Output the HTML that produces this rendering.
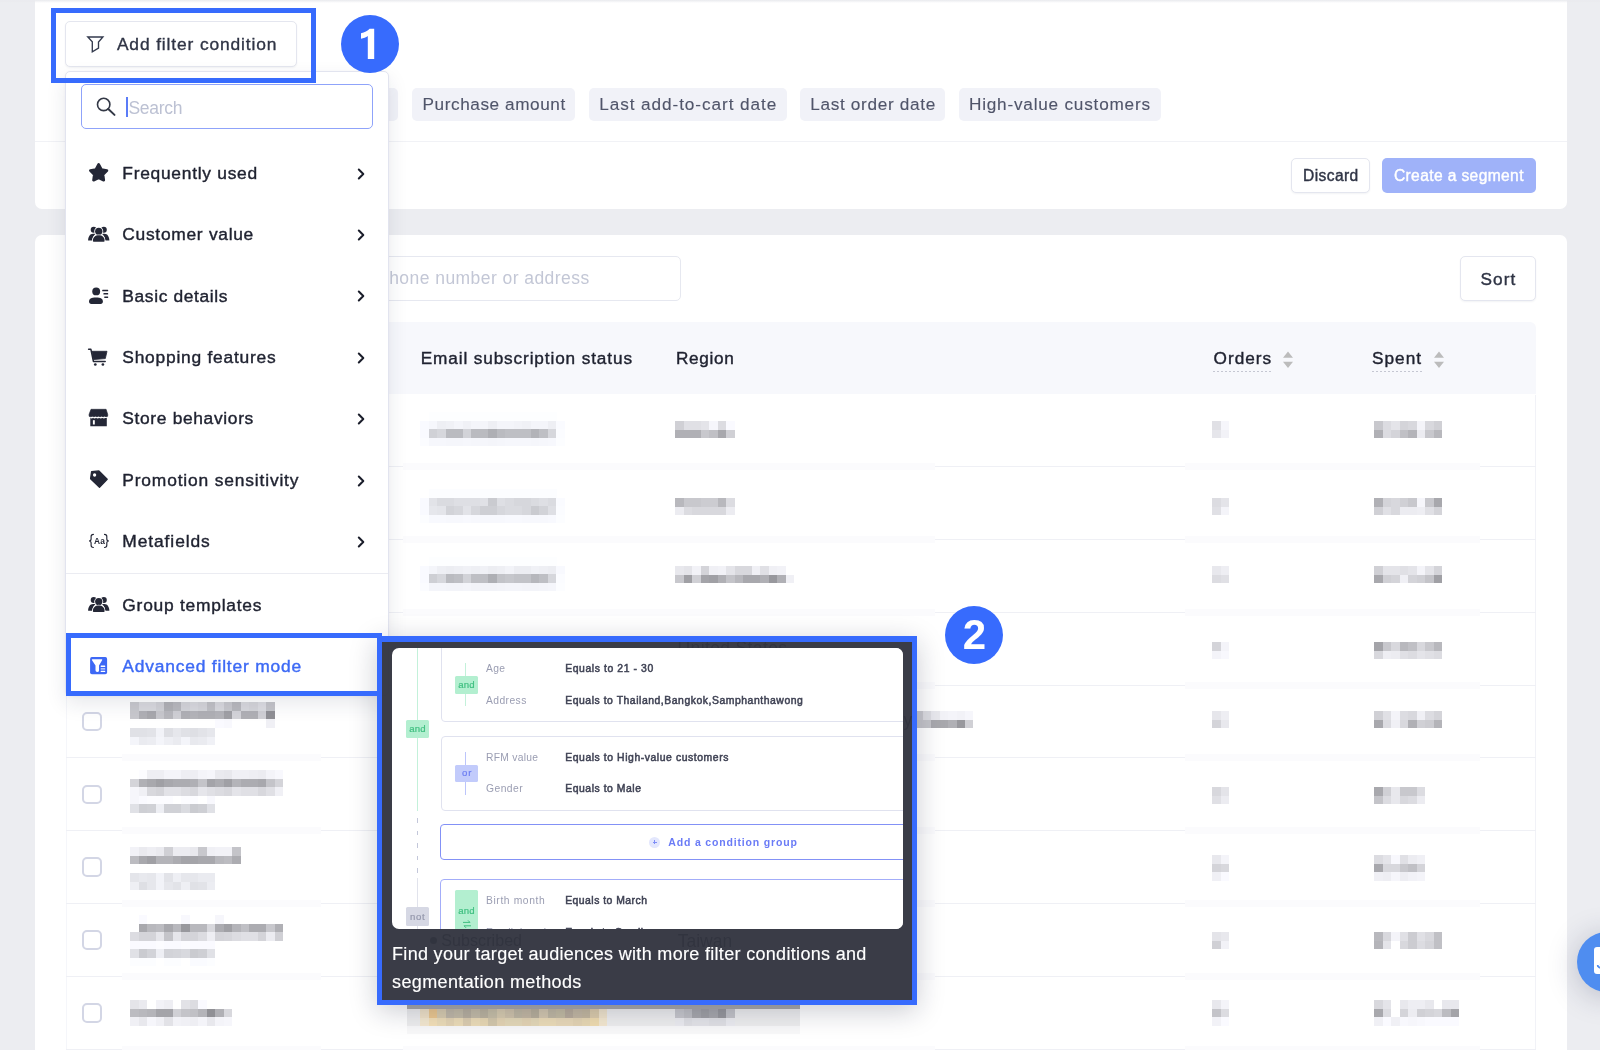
<!DOCTYPE html>
<html><head><meta charset="utf-8"><title>Customers</title><style>
html,body{margin:0;padding:0}
html{width:1600px;height:1050px;overflow:hidden}
body{width:1600px;height:1050px;overflow:hidden;background:#ecedf1;font-family:"Liberation Sans", sans-serif;position:relative}
div,span.t,svg{position:absolute;box-sizing:border-box}
span.t{white-space:pre;display:block}
</style></head>
<body>
<div id="root" style="left:0;top:0;width:1600px;height:1050px;overflow:hidden;will-change:transform">
<div style="left:34.50px;top:-10.00px;width:1532.10px;height:218.50px;background:#fff;border-radius:7px"></div>
<div style="left:0.00px;top:0.00px;width:1600.00px;height:2.50px;background:linear-gradient(#e9eaee,rgba(240,240,243,0))"></div>
<div style="left:34.50px;top:140.50px;width:1532.10px;height:1.00px;background:#f1f2f6"></div>
<div style="left:34.50px;top:235.40px;width:1532.10px;height:834.60px;background:#fff;border-radius:7px"></div>
<div style="left:65.40px;top:21.25px;width:231.30px;height:45.75px;background:#fff;border:1px solid #e4e6ef;border-radius:5px;box-shadow:0 1px 2px rgba(40,50,90,.06)"></div>
<svg style="left:84px;top:33px" width="24" height="24" viewBox="84 33 24 24"><path d="M87.8 37 L102.9 37 L98.5 42 L98.5 48.1 L92.3 51.9 L92.3 41.8 Z" fill="none" stroke="#333a4d" stroke-width="1.35" stroke-linejoin="miter"/></svg>
<span class="t" style="left:116.90px;top:36.00px;font-size:17.4px;line-height:17.4px;color:#2f3445;letter-spacing:0.870px;-webkit-text-stroke:0.34px #2f3445;">Add filter condition</span>
<div style="left:330.00px;top:88.20px;width:68.40px;height:32.40px;background:#f1f2f8;border-radius:5px"></div>
<div style="left:412.00px;top:88.20px;width:163.20px;height:32.40px;background:#f1f2f8;border-radius:5px"></div>
<span class="t" style="left:422.60px;top:96.00px;font-size:17.2px;line-height:17.2px;color:#50556a;letter-spacing:0.563px;-webkit-text-stroke:0.12px #50556a;">Purchase amount</span>
<div style="left:588.70px;top:88.20px;width:198.00px;height:32.40px;background:#f1f2f8;border-radius:5px"></div>
<span class="t" style="left:599.20px;top:96.00px;font-size:17.2px;line-height:17.2px;color:#50556a;letter-spacing:0.925px;-webkit-text-stroke:0.12px #50556a;">Last add-to-cart date</span>
<div style="left:800.20px;top:88.20px;width:145.20px;height:32.40px;background:#f1f2f8;border-radius:5px"></div>
<span class="t" style="left:810.20px;top:96.00px;font-size:17.2px;line-height:17.2px;color:#50556a;letter-spacing:0.684px;-webkit-text-stroke:0.12px #50556a;">Last order date</span>
<div style="left:958.50px;top:88.20px;width:202.10px;height:32.40px;background:#f1f2f8;border-radius:5px"></div>
<span class="t" style="left:969.00px;top:96.00px;font-size:17.2px;line-height:17.2px;color:#50556a;letter-spacing:0.778px;-webkit-text-stroke:0.12px #50556a;">High-value customers</span>
<div style="left:1290.80px;top:157.60px;width:79.70px;height:35.20px;background:#fff;border:1px solid #e4e6ef;border-radius:5px;box-shadow:0 1px 2px rgba(40,50,90,.06)"></div>
<span class="t" style="left:1303.10px;top:168.00px;font-size:15.6px;line-height:15.6px;color:#2f3445;letter-spacing:0.373px;-webkit-text-stroke:0.4px #2f3445;">Discard</span>
<div style="left:1381.50px;top:157.60px;width:154.30px;height:35.30px;background:#9fb2f9;border-radius:5px"></div>
<span class="t" style="left:1393.90px;top:168.00px;font-size:15.6px;line-height:15.6px;color:#ffffff;letter-spacing:0.376px;-webkit-text-stroke:0.4px #ffffff;">Create a segment</span>
<div style="left:65.40px;top:256.20px;width:615.60px;height:44.50px;background:#fff;border:1px solid #e6e8f0;border-radius:5px"></div>
<span class="t" style="left:389.20px;top:270.00px;font-size:17.5px;line-height:17.5px;color:#c3c7d6;letter-spacing:0.444px;">hone number or address</span>
<div style="left:1460.30px;top:256.20px;width:75.30px;height:45.20px;background:#fff;border:1px solid #e4e6ef;border-radius:5px;box-shadow:0 1px 2px rgba(40,50,90,.06)"></div>
<span class="t" style="left:1480.50px;top:271.00px;font-size:17.2px;line-height:17.2px;color:#2f3445;letter-spacing:1.123px;-webkit-text-stroke:0.4px #2f3445;">Sort</span>
<div style="left:66.00px;top:321.80px;width:1469.60px;height:72.70px;background:#f7f8fc;border-radius:6px 6px 0 0"></div>
<span class="t" style="left:420.70px;top:350.00px;font-size:17.2px;line-height:17.2px;color:#1f2230;letter-spacing:0.883px;-webkit-text-stroke:0.42px #1f2230;">Email subscription status</span>
<span class="t" style="left:676.00px;top:350.00px;font-size:17.2px;line-height:17.2px;color:#1f2230;letter-spacing:0.666px;-webkit-text-stroke:0.42px #1f2230;">Region</span>
<span class="t" style="left:1213.60px;top:350.00px;font-size:17.2px;line-height:17.2px;color:#1f2230;letter-spacing:0.974px;-webkit-text-stroke:0.42px #1f2230;">Orders</span>
<span class="t" style="left:1372.10px;top:350.00px;font-size:17.2px;line-height:17.2px;color:#1f2230;letter-spacing:0.995px;-webkit-text-stroke:0.42px #1f2230;">Spent</span>
<div style="left:1213.00px;top:371.00px;width:58.50px;height:1.00px;background:repeating-linear-gradient(90deg,#c5c7d2 0 2px,transparent 2px 4px)"></div>
<div style="left:1371.50px;top:371.00px;width:50.00px;height:1.00px;background:repeating-linear-gradient(90deg,#c5c7d2 0 2px,transparent 2px 4px)"></div>
<svg style="left:1282.1px;top:350px" width="12" height="20" viewBox="0 0 12 20"><path d="M6 1.6 L11 7.8 L1 7.8 Z M6 18 L11 11.8 L1 11.8 Z" fill="#bcbcbc"/></svg>
<svg style="left:1432.8px;top:350px" width="12" height="20" viewBox="0 0 12 20"><path d="M6 1.6 L11 7.8 L1 7.8 Z M6 18 L11 11.8 L1 11.8 Z" fill="#bcbcbc"/></svg>
<div style="left:66.00px;top:394.50px;width:1.00px;height:655.50px;background:#f5f6fa"></div>
<div style="left:1534.80px;top:394.50px;width:1.00px;height:655.50px;background:#f1f2f7"></div>
<div style="left:66.00px;top:466.05px;width:56.00px;height:1.00px;background:#eff0f5"></div>
<div style="left:321.00px;top:466.05px;width:82.00px;height:1.00px;background:#eff0f5"></div>
<div style="left:935.00px;top:466.05px;width:250.00px;height:1.00px;background:#eff0f5"></div>
<div style="left:1480.00px;top:466.05px;width:55.60px;height:1.00px;background:#eff0f5"></div>
<div style="left:122.00px;top:463.05px;width:199.00px;height:7.00px;background:#fbfbfd"></div>
<div style="left:403.00px;top:463.05px;width:532.00px;height:7.00px;background:#fbfbfd"></div>
<div style="left:1185.00px;top:463.05px;width:295.00px;height:7.00px;background:#fbfbfd"></div>
<div style="left:66.00px;top:538.90px;width:56.00px;height:1.00px;background:#eff0f5"></div>
<div style="left:321.00px;top:538.90px;width:82.00px;height:1.00px;background:#eff0f5"></div>
<div style="left:935.00px;top:538.90px;width:250.00px;height:1.00px;background:#eff0f5"></div>
<div style="left:1480.00px;top:538.90px;width:55.60px;height:1.00px;background:#eff0f5"></div>
<div style="left:122.00px;top:535.90px;width:199.00px;height:7.00px;background:#fbfbfd"></div>
<div style="left:403.00px;top:535.90px;width:532.00px;height:7.00px;background:#fbfbfd"></div>
<div style="left:1185.00px;top:535.90px;width:295.00px;height:7.00px;background:#fbfbfd"></div>
<div style="left:66.00px;top:611.75px;width:56.00px;height:1.00px;background:#eff0f5"></div>
<div style="left:321.00px;top:611.75px;width:82.00px;height:1.00px;background:#eff0f5"></div>
<div style="left:935.00px;top:611.75px;width:250.00px;height:1.00px;background:#eff0f5"></div>
<div style="left:1480.00px;top:611.75px;width:55.60px;height:1.00px;background:#eff0f5"></div>
<div style="left:122.00px;top:608.75px;width:199.00px;height:7.00px;background:#fbfbfd"></div>
<div style="left:403.00px;top:608.75px;width:532.00px;height:7.00px;background:#fbfbfd"></div>
<div style="left:1185.00px;top:608.75px;width:295.00px;height:7.00px;background:#fbfbfd"></div>
<div style="left:66.00px;top:684.60px;width:56.00px;height:1.00px;background:#eff0f5"></div>
<div style="left:321.00px;top:684.60px;width:82.00px;height:1.00px;background:#eff0f5"></div>
<div style="left:935.00px;top:684.60px;width:250.00px;height:1.00px;background:#eff0f5"></div>
<div style="left:1480.00px;top:684.60px;width:55.60px;height:1.00px;background:#eff0f5"></div>
<div style="left:122.00px;top:681.60px;width:199.00px;height:7.00px;background:#fbfbfd"></div>
<div style="left:403.00px;top:681.60px;width:532.00px;height:7.00px;background:#fbfbfd"></div>
<div style="left:1185.00px;top:681.60px;width:295.00px;height:7.00px;background:#fbfbfd"></div>
<div style="left:66.00px;top:757.45px;width:56.00px;height:1.00px;background:#eff0f5"></div>
<div style="left:321.00px;top:757.45px;width:82.00px;height:1.00px;background:#eff0f5"></div>
<div style="left:935.00px;top:757.45px;width:250.00px;height:1.00px;background:#eff0f5"></div>
<div style="left:1480.00px;top:757.45px;width:55.60px;height:1.00px;background:#eff0f5"></div>
<div style="left:122.00px;top:754.45px;width:199.00px;height:7.00px;background:#fbfbfd"></div>
<div style="left:403.00px;top:754.45px;width:532.00px;height:7.00px;background:#fbfbfd"></div>
<div style="left:1185.00px;top:754.45px;width:295.00px;height:7.00px;background:#fbfbfd"></div>
<div style="left:66.00px;top:830.30px;width:56.00px;height:1.00px;background:#eff0f5"></div>
<div style="left:321.00px;top:830.30px;width:82.00px;height:1.00px;background:#eff0f5"></div>
<div style="left:935.00px;top:830.30px;width:250.00px;height:1.00px;background:#eff0f5"></div>
<div style="left:1480.00px;top:830.30px;width:55.60px;height:1.00px;background:#eff0f5"></div>
<div style="left:122.00px;top:827.30px;width:199.00px;height:7.00px;background:#fbfbfd"></div>
<div style="left:403.00px;top:827.30px;width:532.00px;height:7.00px;background:#fbfbfd"></div>
<div style="left:1185.00px;top:827.30px;width:295.00px;height:7.00px;background:#fbfbfd"></div>
<div style="left:66.00px;top:903.15px;width:56.00px;height:1.00px;background:#eff0f5"></div>
<div style="left:321.00px;top:903.15px;width:82.00px;height:1.00px;background:#eff0f5"></div>
<div style="left:935.00px;top:903.15px;width:250.00px;height:1.00px;background:#eff0f5"></div>
<div style="left:1480.00px;top:903.15px;width:55.60px;height:1.00px;background:#eff0f5"></div>
<div style="left:122.00px;top:900.15px;width:199.00px;height:7.00px;background:#fbfbfd"></div>
<div style="left:403.00px;top:900.15px;width:532.00px;height:7.00px;background:#fbfbfd"></div>
<div style="left:1185.00px;top:900.15px;width:295.00px;height:7.00px;background:#fbfbfd"></div>
<div style="left:66.00px;top:976.00px;width:56.00px;height:1.00px;background:#eff0f5"></div>
<div style="left:321.00px;top:976.00px;width:82.00px;height:1.00px;background:#eff0f5"></div>
<div style="left:935.00px;top:976.00px;width:250.00px;height:1.00px;background:#eff0f5"></div>
<div style="left:1480.00px;top:976.00px;width:55.60px;height:1.00px;background:#eff0f5"></div>
<div style="left:122.00px;top:973.00px;width:199.00px;height:7.00px;background:#fbfbfd"></div>
<div style="left:403.00px;top:973.00px;width:532.00px;height:7.00px;background:#fbfbfd"></div>
<div style="left:1185.00px;top:973.00px;width:295.00px;height:7.00px;background:#fbfbfd"></div>
<div style="left:66.00px;top:1048.85px;width:56.00px;height:1.00px;background:#eff0f5"></div>
<div style="left:321.00px;top:1048.85px;width:82.00px;height:1.00px;background:#eff0f5"></div>
<div style="left:935.00px;top:1048.85px;width:250.00px;height:1.00px;background:#eff0f5"></div>
<div style="left:1480.00px;top:1048.85px;width:55.60px;height:1.00px;background:#eff0f5"></div>
<div style="left:122.00px;top:1045.85px;width:199.00px;height:7.00px;background:#fbfbfd"></div>
<div style="left:403.00px;top:1045.85px;width:532.00px;height:7.00px;background:#fbfbfd"></div>
<div style="left:1185.00px;top:1045.85px;width:295.00px;height:7.00px;background:#fbfbfd"></div>
<svg style="left:419.68px;top:412.42px" width="144.84" height="34.08" viewBox="0 0 144.84 34.08" shape-rendering="crispEdges"><rect x="8.52" y="0.00" width="8.77" height="8.77" fill="#fdfeff"/><rect x="17.04" y="0.00" width="8.77" height="8.77" fill="#fdfeff"/><rect x="25.56" y="0.00" width="8.77" height="8.77" fill="#fdfeff"/><rect x="34.08" y="0.00" width="8.77" height="8.77" fill="#fdfeff"/><rect x="42.60" y="0.00" width="8.77" height="8.77" fill="#fdfeff"/><rect x="51.12" y="0.00" width="8.77" height="8.77" fill="#fdfeff"/><rect x="59.64" y="0.00" width="8.77" height="8.77" fill="#fdfeff"/><rect x="68.16" y="0.00" width="8.77" height="8.77" fill="#fdfeff"/><rect x="76.68" y="0.00" width="8.77" height="8.77" fill="#fdfeff"/><rect x="85.20" y="0.00" width="8.77" height="8.77" fill="#fdfeff"/><rect x="93.72" y="0.00" width="8.77" height="8.77" fill="#fdfeff"/><rect x="102.24" y="0.00" width="8.77" height="8.77" fill="#fdfeff"/><rect x="110.76" y="0.00" width="8.77" height="8.77" fill="#fdfeff"/><rect x="119.28" y="0.00" width="8.77" height="8.77" fill="#fdfeff"/><rect x="127.80" y="0.00" width="8.77" height="8.77" fill="#fdfeff"/><rect x="0.00" y="8.52" width="8.77" height="8.77" fill="#f9faff"/><rect x="8.52" y="8.52" width="8.77" height="8.77" fill="#f6f7fc"/><rect x="17.04" y="8.52" width="8.77" height="8.77" fill="#eeeff4"/><rect x="25.56" y="8.52" width="8.77" height="8.77" fill="#f0f1f6"/><rect x="34.08" y="8.52" width="8.77" height="8.77" fill="#f4f5fa"/><rect x="42.60" y="8.52" width="8.77" height="8.77" fill="#f0f1f6"/><rect x="51.12" y="8.52" width="8.77" height="8.77" fill="#f4f5fa"/><rect x="59.64" y="8.52" width="8.77" height="8.77" fill="#f4f5fa"/><rect x="68.16" y="8.52" width="8.77" height="8.77" fill="#eeeff4"/><rect x="76.68" y="8.52" width="8.77" height="8.77" fill="#f4f5fa"/><rect x="85.20" y="8.52" width="8.77" height="8.77" fill="#f4f5fa"/><rect x="93.72" y="8.52" width="8.77" height="8.77" fill="#f2f3f8"/><rect x="102.24" y="8.52" width="8.77" height="8.77" fill="#f0f1f6"/><rect x="110.76" y="8.52" width="8.77" height="8.77" fill="#f4f5fa"/><rect x="119.28" y="8.52" width="8.77" height="8.77" fill="#f4f5fa"/><rect x="127.80" y="8.52" width="8.77" height="8.77" fill="#eeeff4"/><rect x="136.32" y="8.52" width="8.77" height="8.77" fill="#fafbff"/><rect x="0.00" y="17.04" width="8.77" height="8.77" fill="#f9faff"/><rect x="8.52" y="17.04" width="8.77" height="8.77" fill="#d0d1d6"/><rect x="17.04" y="17.04" width="8.77" height="8.77" fill="#d6d7dc"/><rect x="25.56" y="17.04" width="8.77" height="8.77" fill="#babbc0"/><rect x="34.08" y="17.04" width="8.77" height="8.77" fill="#babbc0"/><rect x="42.60" y="17.04" width="8.77" height="8.77" fill="#d2d3d8"/><rect x="51.12" y="17.04" width="8.77" height="8.77" fill="#babbc0"/><rect x="59.64" y="17.04" width="8.77" height="8.77" fill="#babbc0"/><rect x="68.16" y="17.04" width="8.77" height="8.77" fill="#aeafb4"/><rect x="76.68" y="17.04" width="8.77" height="8.77" fill="#babbc0"/><rect x="85.20" y="17.04" width="8.77" height="8.77" fill="#bebfc4"/><rect x="93.72" y="17.04" width="8.77" height="8.77" fill="#bebfc4"/><rect x="102.24" y="17.04" width="8.77" height="8.77" fill="#bebfc4"/><rect x="110.76" y="17.04" width="8.77" height="8.77" fill="#b2b3b8"/><rect x="119.28" y="17.04" width="8.77" height="8.77" fill="#bebfc4"/><rect x="127.80" y="17.04" width="8.77" height="8.77" fill="#d6d7dc"/><rect x="136.32" y="17.04" width="8.77" height="8.77" fill="#fbfcff"/><rect x="0.00" y="25.56" width="8.77" height="8.77" fill="#fbfcff"/><rect x="8.52" y="25.56" width="8.77" height="8.77" fill="#f6f7fc"/><rect x="17.04" y="25.56" width="8.77" height="8.77" fill="#f6f7fc"/><rect x="25.56" y="25.56" width="8.77" height="8.77" fill="#f5f6fb"/><rect x="34.08" y="25.56" width="8.77" height="8.77" fill="#f5f6fb"/><rect x="42.60" y="25.56" width="8.77" height="8.77" fill="#f6f7fc"/><rect x="51.12" y="25.56" width="8.77" height="8.77" fill="#f5f6fb"/><rect x="59.64" y="25.56" width="8.77" height="8.77" fill="#f5f6fb"/><rect x="68.16" y="25.56" width="8.77" height="8.77" fill="#f4f5fa"/><rect x="76.68" y="25.56" width="8.77" height="8.77" fill="#f5f6fb"/><rect x="85.20" y="25.56" width="8.77" height="8.77" fill="#f6f7fc"/><rect x="93.72" y="25.56" width="8.77" height="8.77" fill="#f6f7fc"/><rect x="102.24" y="25.56" width="8.77" height="8.77" fill="#f6f7fc"/><rect x="110.76" y="25.56" width="8.77" height="8.77" fill="#f5f6fb"/><rect x="119.28" y="25.56" width="8.77" height="8.77" fill="#f6f7fc"/><rect x="127.80" y="25.56" width="8.77" height="8.77" fill="#f7f8fd"/><rect x="136.32" y="25.56" width="8.77" height="8.77" fill="#fcfdff"/></svg>
<svg style="left:419.68px;top:489.10px" width="144.84" height="34.08" viewBox="0 0 144.84 34.08" shape-rendering="crispEdges"><rect x="8.52" y="0.00" width="8.77" height="8.77" fill="#fcfdff"/><rect x="17.04" y="0.00" width="8.77" height="8.77" fill="#fcfdff"/><rect x="25.56" y="0.00" width="8.77" height="8.77" fill="#fcfdff"/><rect x="34.08" y="0.00" width="8.77" height="8.77" fill="#fcfdff"/><rect x="42.60" y="0.00" width="8.77" height="8.77" fill="#fcfdff"/><rect x="51.12" y="0.00" width="8.77" height="8.77" fill="#fcfdff"/><rect x="59.64" y="0.00" width="8.77" height="8.77" fill="#fcfdff"/><rect x="68.16" y="0.00" width="8.77" height="8.77" fill="#fcfdff"/><rect x="76.68" y="0.00" width="8.77" height="8.77" fill="#fcfdff"/><rect x="85.20" y="0.00" width="8.77" height="8.77" fill="#fcfdff"/><rect x="93.72" y="0.00" width="8.77" height="8.77" fill="#fcfdff"/><rect x="102.24" y="0.00" width="8.77" height="8.77" fill="#fcfdff"/><rect x="110.76" y="0.00" width="8.77" height="8.77" fill="#fcfdff"/><rect x="119.28" y="0.00" width="8.77" height="8.77" fill="#fcfdff"/><rect x="127.80" y="0.00" width="8.77" height="8.77" fill="#fcfdff"/><rect x="0.00" y="8.52" width="8.77" height="8.77" fill="#f9faff"/><rect x="8.52" y="8.52" width="8.77" height="8.77" fill="#e2e3e8"/><rect x="17.04" y="8.52" width="8.77" height="8.77" fill="#dadbe0"/><rect x="25.56" y="8.52" width="8.77" height="8.77" fill="#dadbe0"/><rect x="34.08" y="8.52" width="8.77" height="8.77" fill="#dedfe4"/><rect x="42.60" y="8.52" width="8.77" height="8.77" fill="#dedfe4"/><rect x="51.12" y="8.52" width="8.77" height="8.77" fill="#dedfe4"/><rect x="59.64" y="8.52" width="8.77" height="8.77" fill="#e0e1e6"/><rect x="68.16" y="8.52" width="8.77" height="8.77" fill="#cacbd0"/><rect x="76.68" y="8.52" width="8.77" height="8.77" fill="#dedfe4"/><rect x="85.20" y="8.52" width="8.77" height="8.77" fill="#dadbe0"/><rect x="93.72" y="8.52" width="8.77" height="8.77" fill="#d6d7dc"/><rect x="102.24" y="8.52" width="8.77" height="8.77" fill="#d6d7dc"/><rect x="110.76" y="8.52" width="8.77" height="8.77" fill="#dadbe0"/><rect x="119.28" y="8.52" width="8.77" height="8.77" fill="#dedfe4"/><rect x="127.80" y="8.52" width="8.77" height="8.77" fill="#dadbe0"/><rect x="136.32" y="8.52" width="8.77" height="8.77" fill="#fafbff"/><rect x="0.00" y="17.04" width="8.77" height="8.77" fill="#f9faff"/><rect x="8.52" y="17.04" width="8.77" height="8.77" fill="#e6e7ec"/><rect x="17.04" y="17.04" width="8.77" height="8.77" fill="#e4e5ea"/><rect x="25.56" y="17.04" width="8.77" height="8.77" fill="#d2d3d8"/><rect x="34.08" y="17.04" width="8.77" height="8.77" fill="#d6d7dc"/><rect x="42.60" y="17.04" width="8.77" height="8.77" fill="#e2e3e8"/><rect x="51.12" y="17.04" width="8.77" height="8.77" fill="#d6d7dc"/><rect x="59.64" y="17.04" width="8.77" height="8.77" fill="#cecfd4"/><rect x="68.16" y="17.04" width="8.77" height="8.77" fill="#cecfd4"/><rect x="76.68" y="17.04" width="8.77" height="8.77" fill="#d6d7dc"/><rect x="85.20" y="17.04" width="8.77" height="8.77" fill="#dadbe0"/><rect x="93.72" y="17.04" width="8.77" height="8.77" fill="#dadbe0"/><rect x="102.24" y="17.04" width="8.77" height="8.77" fill="#d6d7dc"/><rect x="110.76" y="17.04" width="8.77" height="8.77" fill="#cacbd0"/><rect x="119.28" y="17.04" width="8.77" height="8.77" fill="#d2d3d8"/><rect x="127.80" y="17.04" width="8.77" height="8.77" fill="#dedfe4"/><rect x="136.32" y="17.04" width="8.77" height="8.77" fill="#fbfcff"/><rect x="0.00" y="25.56" width="8.77" height="8.77" fill="#fcfdff"/><rect x="8.52" y="25.56" width="8.77" height="8.77" fill="#f8f9fe"/><rect x="17.04" y="25.56" width="8.77" height="8.77" fill="#f8f9fe"/><rect x="25.56" y="25.56" width="8.77" height="8.77" fill="#f7f8fd"/><rect x="34.08" y="25.56" width="8.77" height="8.77" fill="#f7f8fd"/><rect x="42.60" y="25.56" width="8.77" height="8.77" fill="#f8f9fe"/><rect x="51.12" y="25.56" width="8.77" height="8.77" fill="#f7f8fd"/><rect x="59.64" y="25.56" width="8.77" height="8.77" fill="#f7f8fd"/><rect x="68.16" y="25.56" width="8.77" height="8.77" fill="#f7f8fd"/><rect x="76.68" y="25.56" width="8.77" height="8.77" fill="#f7f8fd"/><rect x="85.20" y="25.56" width="8.77" height="8.77" fill="#f8f9fe"/><rect x="93.72" y="25.56" width="8.77" height="8.77" fill="#f8f9fe"/><rect x="102.24" y="25.56" width="8.77" height="8.77" fill="#f7f8fd"/><rect x="110.76" y="25.56" width="8.77" height="8.77" fill="#f7f8fd"/><rect x="119.28" y="25.56" width="8.77" height="8.77" fill="#f7f8fd"/><rect x="127.80" y="25.56" width="8.77" height="8.77" fill="#f8f9fe"/><rect x="136.32" y="25.56" width="8.77" height="8.77" fill="#fcfdff"/></svg>
<svg style="left:419.68px;top:557.26px" width="144.84" height="34.08" viewBox="0 0 144.84 34.08" shape-rendering="crispEdges"><rect x="8.52" y="0.00" width="8.77" height="8.77" fill="#fdfeff"/><rect x="17.04" y="0.00" width="8.77" height="8.77" fill="#fdfeff"/><rect x="25.56" y="0.00" width="8.77" height="8.77" fill="#fdfeff"/><rect x="34.08" y="0.00" width="8.77" height="8.77" fill="#fdfeff"/><rect x="42.60" y="0.00" width="8.77" height="8.77" fill="#fdfeff"/><rect x="51.12" y="0.00" width="8.77" height="8.77" fill="#fdfeff"/><rect x="59.64" y="0.00" width="8.77" height="8.77" fill="#fdfeff"/><rect x="68.16" y="0.00" width="8.77" height="8.77" fill="#fdfeff"/><rect x="76.68" y="0.00" width="8.77" height="8.77" fill="#fdfeff"/><rect x="85.20" y="0.00" width="8.77" height="8.77" fill="#fdfeff"/><rect x="93.72" y="0.00" width="8.77" height="8.77" fill="#fdfeff"/><rect x="102.24" y="0.00" width="8.77" height="8.77" fill="#fdfeff"/><rect x="110.76" y="0.00" width="8.77" height="8.77" fill="#fdfeff"/><rect x="119.28" y="0.00" width="8.77" height="8.77" fill="#fdfeff"/><rect x="127.80" y="0.00" width="8.77" height="8.77" fill="#fdfeff"/><rect x="0.00" y="8.52" width="8.77" height="8.77" fill="#f9faff"/><rect x="8.52" y="8.52" width="8.77" height="8.77" fill="#f4f5fa"/><rect x="17.04" y="8.52" width="8.77" height="8.77" fill="#eeeff4"/><rect x="25.56" y="8.52" width="8.77" height="8.77" fill="#ecedf2"/><rect x="34.08" y="8.52" width="8.77" height="8.77" fill="#eeeff4"/><rect x="42.60" y="8.52" width="8.77" height="8.77" fill="#f0f1f6"/><rect x="51.12" y="8.52" width="8.77" height="8.77" fill="#eeeff4"/><rect x="59.64" y="8.52" width="8.77" height="8.77" fill="#f0f1f6"/><rect x="68.16" y="8.52" width="8.77" height="8.77" fill="#ecedf2"/><rect x="76.68" y="8.52" width="8.77" height="8.77" fill="#eeeff4"/><rect x="85.20" y="8.52" width="8.77" height="8.77" fill="#f2f3f8"/><rect x="93.72" y="8.52" width="8.77" height="8.77" fill="#ecedf2"/><rect x="102.24" y="8.52" width="8.77" height="8.77" fill="#ecedf2"/><rect x="110.76" y="8.52" width="8.77" height="8.77" fill="#f0f1f6"/><rect x="119.28" y="8.52" width="8.77" height="8.77" fill="#eeeff4"/><rect x="127.80" y="8.52" width="8.77" height="8.77" fill="#ecedf2"/><rect x="136.32" y="8.52" width="8.77" height="8.77" fill="#f8f9fe"/><rect x="0.00" y="17.04" width="8.77" height="8.77" fill="#f9faff"/><rect x="8.52" y="17.04" width="8.77" height="8.77" fill="#cecfd4"/><rect x="17.04" y="17.04" width="8.77" height="8.77" fill="#d6d7dc"/><rect x="25.56" y="17.04" width="8.77" height="8.77" fill="#babbc0"/><rect x="34.08" y="17.04" width="8.77" height="8.77" fill="#bebfc4"/><rect x="42.60" y="17.04" width="8.77" height="8.77" fill="#d2d3d8"/><rect x="51.12" y="17.04" width="8.77" height="8.77" fill="#bebfc4"/><rect x="59.64" y="17.04" width="8.77" height="8.77" fill="#bebfc4"/><rect x="68.16" y="17.04" width="8.77" height="8.77" fill="#aeafb4"/><rect x="76.68" y="17.04" width="8.77" height="8.77" fill="#c2c3c8"/><rect x="85.20" y="17.04" width="8.77" height="8.77" fill="#c6c7cc"/><rect x="93.72" y="17.04" width="8.77" height="8.77" fill="#c2c3c8"/><rect x="102.24" y="17.04" width="8.77" height="8.77" fill="#c2c3c8"/><rect x="110.76" y="17.04" width="8.77" height="8.77" fill="#b6b7bc"/><rect x="119.28" y="17.04" width="8.77" height="8.77" fill="#bebfc4"/><rect x="127.80" y="17.04" width="8.77" height="8.77" fill="#d6d7dc"/><rect x="136.32" y="17.04" width="8.77" height="8.77" fill="#fbfcff"/><rect x="0.00" y="25.56" width="8.77" height="8.77" fill="#fbfcff"/><rect x="8.52" y="25.56" width="8.77" height="8.77" fill="#f4f5fa"/><rect x="17.04" y="25.56" width="8.77" height="8.77" fill="#f4f5fa"/><rect x="25.56" y="25.56" width="8.77" height="8.77" fill="#f3f4f9"/><rect x="34.08" y="25.56" width="8.77" height="8.77" fill="#f3f4f9"/><rect x="42.60" y="25.56" width="8.77" height="8.77" fill="#f4f5fa"/><rect x="51.12" y="25.56" width="8.77" height="8.77" fill="#f2f3f8"/><rect x="59.64" y="25.56" width="8.77" height="8.77" fill="#f2f3f8"/><rect x="68.16" y="25.56" width="8.77" height="8.77" fill="#f2f3f8"/><rect x="76.68" y="25.56" width="8.77" height="8.77" fill="#f3f4f9"/><rect x="85.20" y="25.56" width="8.77" height="8.77" fill="#f4f5fa"/><rect x="93.72" y="25.56" width="8.77" height="8.77" fill="#f4f5fa"/><rect x="102.24" y="25.56" width="8.77" height="8.77" fill="#f3f4f9"/><rect x="110.76" y="25.56" width="8.77" height="8.77" fill="#f3f4f9"/><rect x="119.28" y="25.56" width="8.77" height="8.77" fill="#f4f5fa"/><rect x="127.80" y="25.56" width="8.77" height="8.77" fill="#f5f6fb"/><rect x="136.32" y="25.56" width="8.77" height="8.77" fill="#fcfdff"/></svg>
<svg style="left:675.28px;top:420.94px" width="59.64" height="17.04" viewBox="0 0 59.64 17.04" shape-rendering="crispEdges"><rect x="0.00" y="0.00" width="8.77" height="8.77" fill="#d0d0d5"/><rect x="8.52" y="0.00" width="8.77" height="8.77" fill="#e0e0e5"/><rect x="17.04" y="0.00" width="8.77" height="8.77" fill="#e0e0e5"/><rect x="25.56" y="0.00" width="8.77" height="8.77" fill="#e4e4e9"/><rect x="34.08" y="0.00" width="8.77" height="8.77" fill="#f6f6fb"/><rect x="42.60" y="0.00" width="8.77" height="8.77" fill="#dcdce1"/><rect x="51.12" y="0.00" width="8.77" height="8.77" fill="#fafaff"/><rect x="0.00" y="8.52" width="8.77" height="8.77" fill="#b0b0b5"/><rect x="8.52" y="8.52" width="8.77" height="8.77" fill="#b0b0b5"/><rect x="17.04" y="8.52" width="8.77" height="8.77" fill="#b0b0b5"/><rect x="25.56" y="8.52" width="8.77" height="8.77" fill="#c8c8cd"/><rect x="34.08" y="8.52" width="8.77" height="8.77" fill="#c0c0c5"/><rect x="42.60" y="8.52" width="8.77" height="8.77" fill="#a8a8ad"/><rect x="51.12" y="8.52" width="8.77" height="8.77" fill="#d0d0d5"/></svg>
<svg style="left:675.28px;top:497.62px" width="59.64" height="17.04" viewBox="0 0 59.64 17.04" shape-rendering="crispEdges"><rect x="0.00" y="0.00" width="8.77" height="8.77" fill="#b8b8bd"/><rect x="8.52" y="0.00" width="8.77" height="8.77" fill="#c8c8cd"/><rect x="17.04" y="0.00" width="8.77" height="8.77" fill="#c8c8cd"/><rect x="25.56" y="0.00" width="8.77" height="8.77" fill="#ccccd1"/><rect x="34.08" y="0.00" width="8.77" height="8.77" fill="#ccccd1"/><rect x="42.60" y="0.00" width="8.77" height="8.77" fill="#b8b8bd"/><rect x="51.12" y="0.00" width="8.77" height="8.77" fill="#dcdce1"/><rect x="0.00" y="8.52" width="8.77" height="8.77" fill="#ececf1"/><rect x="8.52" y="8.52" width="8.77" height="8.77" fill="#dcdce1"/><rect x="17.04" y="8.52" width="8.77" height="8.77" fill="#d8d8dd"/><rect x="25.56" y="8.52" width="8.77" height="8.77" fill="#d8d8dd"/><rect x="34.08" y="8.52" width="8.77" height="8.77" fill="#d8d8dd"/><rect x="42.60" y="8.52" width="8.77" height="8.77" fill="#d8d8dd"/><rect x="51.12" y="8.52" width="8.77" height="8.77" fill="#ececf1"/></svg>
<svg style="left:675.28px;top:565.78px" width="119.28" height="17.04" viewBox="0 0 119.28 17.04" shape-rendering="crispEdges"><rect x="0.00" y="0.00" width="8.77" height="8.77" fill="#e8e8ed"/><rect x="8.52" y="0.00" width="8.77" height="8.77" fill="#e4e4e9"/><rect x="17.04" y="0.00" width="8.77" height="8.77" fill="#f2f2f7"/><rect x="25.56" y="0.00" width="8.77" height="8.77" fill="#d4d4d9"/><rect x="34.08" y="0.00" width="8.77" height="8.77" fill="#f0f0f5"/><rect x="42.60" y="0.00" width="8.77" height="8.77" fill="#f2f2f7"/><rect x="51.12" y="0.00" width="8.77" height="8.77" fill="#e4e4e9"/><rect x="59.64" y="0.00" width="8.77" height="8.77" fill="#d8d8dd"/><rect x="68.16" y="0.00" width="8.77" height="8.77" fill="#d8d8dd"/><rect x="76.68" y="0.00" width="8.77" height="8.77" fill="#f0f0f5"/><rect x="85.20" y="0.00" width="8.77" height="8.77" fill="#e0e0e5"/><rect x="93.72" y="0.00" width="8.77" height="8.77" fill="#f0f0f5"/><rect x="102.24" y="0.00" width="8.77" height="8.77" fill="#f2f2f7"/><rect x="0.00" y="8.52" width="8.77" height="8.77" fill="#c8c8cd"/><rect x="8.52" y="8.52" width="8.77" height="8.77" fill="#a0a0a5"/><rect x="17.04" y="8.52" width="8.77" height="8.77" fill="#d0d0d5"/><rect x="25.56" y="8.52" width="8.77" height="8.77" fill="#a4a4a9"/><rect x="34.08" y="8.52" width="8.77" height="8.77" fill="#a0a0a5"/><rect x="42.60" y="8.52" width="8.77" height="8.77" fill="#b0b0b5"/><rect x="51.12" y="8.52" width="8.77" height="8.77" fill="#c4c4c9"/><rect x="59.64" y="8.52" width="8.77" height="8.77" fill="#b8b8bd"/><rect x="68.16" y="8.52" width="8.77" height="8.77" fill="#a8a8ad"/><rect x="76.68" y="8.52" width="8.77" height="8.77" fill="#a8a8ad"/><rect x="85.20" y="8.52" width="8.77" height="8.77" fill="#b0b0b5"/><rect x="93.72" y="8.52" width="8.77" height="8.77" fill="#98989d"/><rect x="102.24" y="8.52" width="8.77" height="8.77" fill="#b0b0b5"/><rect x="110.76" y="8.52" width="8.77" height="8.77" fill="#f0f0f5"/></svg>
<svg style="left:913.84px;top:710.62px" width="59.64" height="17.04" viewBox="0 0 59.64 17.04" shape-rendering="crispEdges"><rect x="0.00" y="0.00" width="8.77" height="8.77" fill="#c8c8cd"/><rect x="8.52" y="0.00" width="8.77" height="8.77" fill="#dcdce1"/><rect x="17.04" y="0.00" width="8.77" height="8.77" fill="#e8e8ed"/><rect x="25.56" y="0.00" width="8.77" height="8.77" fill="#f2f2f7"/><rect x="34.08" y="0.00" width="8.77" height="8.77" fill="#f4f4f9"/><rect x="42.60" y="0.00" width="8.77" height="8.77" fill="#f2f2f7"/><rect x="51.12" y="0.00" width="8.77" height="8.77" fill="#f6f6fb"/><rect x="0.00" y="8.52" width="8.77" height="8.77" fill="#c4c4c9"/><rect x="8.52" y="8.52" width="8.77" height="8.77" fill="#c4c4c9"/><rect x="17.04" y="8.52" width="8.77" height="8.77" fill="#a8a8ad"/><rect x="25.56" y="8.52" width="8.77" height="8.77" fill="#a8a8ad"/><rect x="34.08" y="8.52" width="8.77" height="8.77" fill="#b0b0b5"/><rect x="42.60" y="8.52" width="8.77" height="8.77" fill="#98989d"/><rect x="51.12" y="8.52" width="8.77" height="8.77" fill="#d0d0d5"/></svg>
<svg style="left:1212.04px;top:420.94px" width="17.04" height="17.04" viewBox="0 0 17.04 17.04" shape-rendering="crispEdges"><rect x="0.00" y="0.00" width="8.77" height="8.77" fill="#e0e0e5"/><rect x="8.52" y="0.00" width="8.77" height="8.77" fill="#f6f6fb"/><rect x="0.00" y="8.52" width="8.77" height="8.77" fill="#e6e6eb"/><rect x="8.52" y="8.52" width="8.77" height="8.77" fill="#f2f2f7"/></svg>
<svg style="left:1373.92px;top:420.94px" width="68.16" height="17.04" viewBox="0 0 68.16 17.04" shape-rendering="crispEdges"><rect x="0.00" y="0.00" width="8.77" height="8.77" fill="#c8c8cd"/><rect x="8.52" y="0.00" width="8.77" height="8.77" fill="#dcdce1"/><rect x="17.04" y="0.00" width="8.77" height="8.77" fill="#e4e4e9"/><rect x="25.56" y="0.00" width="8.77" height="8.77" fill="#d4d4d9"/><rect x="34.08" y="0.00" width="8.77" height="8.77" fill="#d8d8dd"/><rect x="42.60" y="0.00" width="8.77" height="8.77" fill="#f4f4f9"/><rect x="51.12" y="0.00" width="8.77" height="8.77" fill="#d8d8dd"/><rect x="59.64" y="0.00" width="8.77" height="8.77" fill="#d0d0d5"/><rect x="0.00" y="8.52" width="8.77" height="8.77" fill="#b0b0b5"/><rect x="8.52" y="8.52" width="8.77" height="8.77" fill="#dcdce1"/><rect x="17.04" y="8.52" width="8.77" height="8.77" fill="#d4d4d9"/><rect x="25.56" y="8.52" width="8.77" height="8.77" fill="#c0c0c5"/><rect x="34.08" y="8.52" width="8.77" height="8.77" fill="#b4b4b9"/><rect x="42.60" y="8.52" width="8.77" height="8.77" fill="#ececf1"/><rect x="51.12" y="8.52" width="8.77" height="8.77" fill="#c8c8cd"/><rect x="59.64" y="8.52" width="8.77" height="8.77" fill="#b8b8bd"/></svg>
<svg style="left:1212.04px;top:497.62px" width="17.04" height="17.04" viewBox="0 0 17.04 17.04" shape-rendering="crispEdges"><rect x="0.00" y="0.00" width="8.77" height="8.77" fill="#dcdce1"/><rect x="8.52" y="0.00" width="8.77" height="8.77" fill="#e4e4e9"/><rect x="0.00" y="8.52" width="8.77" height="8.77" fill="#e0e0e5"/><rect x="8.52" y="8.52" width="8.77" height="8.77" fill="#f4f4f9"/></svg>
<svg style="left:1373.92px;top:497.62px" width="68.16" height="17.04" viewBox="0 0 68.16 17.04" shape-rendering="crispEdges"><rect x="0.00" y="0.00" width="8.77" height="8.77" fill="#b0b0b5"/><rect x="8.52" y="0.00" width="8.77" height="8.77" fill="#d4d4d9"/><rect x="17.04" y="0.00" width="8.77" height="8.77" fill="#d8d8dd"/><rect x="25.56" y="0.00" width="8.77" height="8.77" fill="#d0d0d5"/><rect x="34.08" y="0.00" width="8.77" height="8.77" fill="#c8c8cd"/><rect x="42.60" y="0.00" width="8.77" height="8.77" fill="#f6f6fb"/><rect x="51.12" y="0.00" width="8.77" height="8.77" fill="#c8c8cd"/><rect x="59.64" y="0.00" width="8.77" height="8.77" fill="#a8a8ad"/><rect x="0.00" y="8.52" width="8.77" height="8.77" fill="#d0d0d5"/><rect x="8.52" y="8.52" width="8.77" height="8.77" fill="#e0e0e5"/><rect x="17.04" y="8.52" width="8.77" height="8.77" fill="#d8d8dd"/><rect x="25.56" y="8.52" width="8.77" height="8.77" fill="#ececf1"/><rect x="34.08" y="8.52" width="8.77" height="8.77" fill="#ececf1"/><rect x="42.60" y="8.52" width="8.77" height="8.77" fill="#eeeef3"/><rect x="51.12" y="8.52" width="8.77" height="8.77" fill="#e0e0e5"/><rect x="59.64" y="8.52" width="8.77" height="8.77" fill="#d4d4d9"/></svg>
<svg style="left:1212.04px;top:565.78px" width="17.04" height="17.04" viewBox="0 0 17.04 17.04" shape-rendering="crispEdges"><rect x="0.00" y="0.00" width="8.77" height="8.77" fill="#e8e8ed"/><rect x="8.52" y="0.00" width="8.77" height="8.77" fill="#eeeef3"/><rect x="0.00" y="8.52" width="8.77" height="8.77" fill="#dcdce1"/><rect x="8.52" y="8.52" width="8.77" height="8.77" fill="#e0e0e5"/></svg>
<svg style="left:1373.92px;top:565.78px" width="68.16" height="17.04" viewBox="0 0 68.16 17.04" shape-rendering="crispEdges"><rect x="0.00" y="0.00" width="8.77" height="8.77" fill="#d0d0d5"/><rect x="8.52" y="0.00" width="8.77" height="8.77" fill="#e4e4e9"/><rect x="17.04" y="0.00" width="8.77" height="8.77" fill="#e4e4e9"/><rect x="25.56" y="0.00" width="8.77" height="8.77" fill="#e0e0e5"/><rect x="34.08" y="0.00" width="8.77" height="8.77" fill="#e4e4e9"/><rect x="42.60" y="0.00" width="8.77" height="8.77" fill="#f4f4f9"/><rect x="51.12" y="0.00" width="8.77" height="8.77" fill="#e4e4e9"/><rect x="59.64" y="0.00" width="8.77" height="8.77" fill="#d4d4d9"/><rect x="0.00" y="8.52" width="8.77" height="8.77" fill="#a8a8ad"/><rect x="8.52" y="8.52" width="8.77" height="8.77" fill="#d0d0d5"/><rect x="17.04" y="8.52" width="8.77" height="8.77" fill="#d4d4d9"/><rect x="25.56" y="8.52" width="8.77" height="8.77" fill="#f0f0f5"/><rect x="34.08" y="8.52" width="8.77" height="8.77" fill="#d4d4d9"/><rect x="42.60" y="8.52" width="8.77" height="8.77" fill="#d0d0d5"/><rect x="51.12" y="8.52" width="8.77" height="8.77" fill="#c4c4c9"/><rect x="59.64" y="8.52" width="8.77" height="8.77" fill="#a0a0a5"/></svg>
<svg style="left:1212.04px;top:642.46px" width="17.04" height="17.04" viewBox="0 0 17.04 17.04" shape-rendering="crispEdges"><rect x="0.00" y="0.00" width="8.77" height="8.77" fill="#d4d4d9"/><rect x="8.52" y="0.00" width="8.77" height="8.77" fill="#f4f4f9"/><rect x="0.00" y="8.52" width="8.77" height="8.77" fill="#f4f4f9"/><rect x="8.52" y="8.52" width="8.77" height="8.77" fill="#f8f8fd"/></svg>
<svg style="left:1373.92px;top:642.46px" width="68.16" height="17.04" viewBox="0 0 68.16 17.04" shape-rendering="crispEdges"><rect x="0.00" y="0.00" width="8.77" height="8.77" fill="#a4a4a9"/><rect x="8.52" y="0.00" width="8.77" height="8.77" fill="#c8c8cd"/><rect x="17.04" y="0.00" width="8.77" height="8.77" fill="#d8d8dd"/><rect x="25.56" y="0.00" width="8.77" height="8.77" fill="#b8b8bd"/><rect x="34.08" y="0.00" width="8.77" height="8.77" fill="#c0c0c5"/><rect x="42.60" y="0.00" width="8.77" height="8.77" fill="#d8d8dd"/><rect x="51.12" y="0.00" width="8.77" height="8.77" fill="#c8c8cd"/><rect x="59.64" y="0.00" width="8.77" height="8.77" fill="#b8b8bd"/><rect x="0.00" y="8.52" width="8.77" height="8.77" fill="#d8d8dd"/><rect x="8.52" y="8.52" width="8.77" height="8.77" fill="#eeeef3"/><rect x="17.04" y="8.52" width="8.77" height="8.77" fill="#ececf1"/><rect x="25.56" y="8.52" width="8.77" height="8.77" fill="#e0e0e5"/><rect x="34.08" y="8.52" width="8.77" height="8.77" fill="#dcdce1"/><rect x="42.60" y="8.52" width="8.77" height="8.77" fill="#e4e4e9"/><rect x="51.12" y="8.52" width="8.77" height="8.77" fill="#e0e0e5"/><rect x="59.64" y="8.52" width="8.77" height="8.77" fill="#dcdce1"/></svg>
<svg style="left:1212.04px;top:710.62px" width="17.04" height="17.04" viewBox="0 0 17.04 17.04" shape-rendering="crispEdges"><rect x="0.00" y="0.00" width="8.77" height="8.77" fill="#e6e6eb"/><rect x="8.52" y="0.00" width="8.77" height="8.77" fill="#eeeef3"/><rect x="0.00" y="8.52" width="8.77" height="8.77" fill="#d4d4d9"/><rect x="8.52" y="8.52" width="8.77" height="8.77" fill="#e8e8ed"/></svg>
<svg style="left:1373.92px;top:710.62px" width="68.16" height="17.04" viewBox="0 0 68.16 17.04" shape-rendering="crispEdges"><rect x="0.00" y="0.00" width="8.77" height="8.77" fill="#d0d0d5"/><rect x="8.52" y="0.00" width="8.77" height="8.77" fill="#e0e0e5"/><rect x="17.04" y="0.00" width="8.77" height="8.77" fill="#f4f4f9"/><rect x="25.56" y="0.00" width="8.77" height="8.77" fill="#dcdce1"/><rect x="34.08" y="0.00" width="8.77" height="8.77" fill="#d8d8dd"/><rect x="42.60" y="0.00" width="8.77" height="8.77" fill="#f0f0f5"/><rect x="51.12" y="0.00" width="8.77" height="8.77" fill="#dcdce1"/><rect x="59.64" y="0.00" width="8.77" height="8.77" fill="#d4d4d9"/><rect x="0.00" y="8.52" width="8.77" height="8.77" fill="#a8a8ad"/><rect x="8.52" y="8.52" width="8.77" height="8.77" fill="#dcdce1"/><rect x="17.04" y="8.52" width="8.77" height="8.77" fill="#f0f0f5"/><rect x="25.56" y="8.52" width="8.77" height="8.77" fill="#d8d8dd"/><rect x="34.08" y="8.52" width="8.77" height="8.77" fill="#b0b0b5"/><rect x="42.60" y="8.52" width="8.77" height="8.77" fill="#d0d0d5"/><rect x="51.12" y="8.52" width="8.77" height="8.77" fill="#ccccd1"/><rect x="59.64" y="8.52" width="8.77" height="8.77" fill="#b4b4b9"/></svg>
<svg style="left:1212.04px;top:787.30px" width="17.04" height="17.04" viewBox="0 0 17.04 17.04" shape-rendering="crispEdges"><rect x="0.00" y="0.00" width="8.77" height="8.77" fill="#d8d8dd"/><rect x="8.52" y="0.00" width="8.77" height="8.77" fill="#e4e4e9"/><rect x="0.00" y="8.52" width="8.77" height="8.77" fill="#e0e0e5"/><rect x="8.52" y="8.52" width="8.77" height="8.77" fill="#ececf1"/></svg>
<svg style="left:1373.92px;top:787.30px" width="51.12" height="17.04" viewBox="0 0 51.12 17.04" shape-rendering="crispEdges"><rect x="0.00" y="0.00" width="8.77" height="8.77" fill="#a8a8ad"/><rect x="8.52" y="0.00" width="8.77" height="8.77" fill="#d0d0d5"/><rect x="17.04" y="0.00" width="8.77" height="8.77" fill="#e8e8ed"/><rect x="25.56" y="0.00" width="8.77" height="8.77" fill="#c8c8cd"/><rect x="34.08" y="0.00" width="8.77" height="8.77" fill="#c8c8cd"/><rect x="42.60" y="0.00" width="8.77" height="8.77" fill="#dcdce1"/><rect x="0.00" y="8.52" width="8.77" height="8.77" fill="#c4c4c9"/><rect x="8.52" y="8.52" width="8.77" height="8.77" fill="#dcdce1"/><rect x="17.04" y="8.52" width="8.77" height="8.77" fill="#e8e8ed"/><rect x="25.56" y="8.52" width="8.77" height="8.77" fill="#d8d8dd"/><rect x="34.08" y="8.52" width="8.77" height="8.77" fill="#dcdce1"/><rect x="42.60" y="8.52" width="8.77" height="8.77" fill="#ececf1"/></svg>
<svg style="left:1212.04px;top:855.46px" width="17.04" height="25.56" viewBox="0 0 17.04 25.56" shape-rendering="crispEdges"><rect x="0.00" y="0.00" width="8.77" height="8.77" fill="#e8e8ed"/><rect x="8.52" y="0.00" width="8.77" height="8.77" fill="#f4f4f9"/><rect x="0.00" y="8.52" width="8.77" height="8.77" fill="#d4d4d9"/><rect x="8.52" y="8.52" width="8.77" height="8.77" fill="#d8d8dd"/><rect x="0.00" y="17.04" width="8.77" height="8.77" fill="#f0f0f5"/><rect x="8.52" y="17.04" width="8.77" height="8.77" fill="#fafaff"/></svg>
<svg style="left:1373.92px;top:855.46px" width="51.12" height="25.56" viewBox="0 0 51.12 25.56" shape-rendering="crispEdges"><rect x="0.00" y="0.00" width="8.77" height="8.77" fill="#dcdce1"/><rect x="8.52" y="0.00" width="8.77" height="8.77" fill="#e4e4e9"/><rect x="17.04" y="0.00" width="8.77" height="8.77" fill="#f8f8fd"/><rect x="25.56" y="0.00" width="8.77" height="8.77" fill="#e0e0e5"/><rect x="34.08" y="0.00" width="8.77" height="8.77" fill="#ececf1"/><rect x="42.60" y="0.00" width="8.77" height="8.77" fill="#f0f0f5"/><rect x="0.00" y="8.52" width="8.77" height="8.77" fill="#a8a8ad"/><rect x="8.52" y="8.52" width="8.77" height="8.77" fill="#d8d8dd"/><rect x="17.04" y="8.52" width="8.77" height="8.77" fill="#d8d8dd"/><rect x="25.56" y="8.52" width="8.77" height="8.77" fill="#c8c8cd"/><rect x="34.08" y="8.52" width="8.77" height="8.77" fill="#c0c0c5"/><rect x="42.60" y="8.52" width="8.77" height="8.77" fill="#d4d4d9"/><rect x="0.00" y="17.04" width="8.77" height="8.77" fill="#f0f0f5"/><rect x="8.52" y="17.04" width="8.77" height="8.77" fill="#eeeef3"/><rect x="17.04" y="17.04" width="8.77" height="8.77" fill="#f6f6fb"/><rect x="25.56" y="17.04" width="8.77" height="8.77" fill="#eeeef3"/><rect x="34.08" y="17.04" width="8.77" height="8.77" fill="#f2f2f7"/><rect x="42.60" y="17.04" width="8.77" height="8.77" fill="#f4f4f9"/></svg>
<svg style="left:1212.04px;top:932.14px" width="17.04" height="17.04" viewBox="0 0 17.04 17.04" shape-rendering="crispEdges"><rect x="0.00" y="0.00" width="8.77" height="8.77" fill="#e4e4e9"/><rect x="8.52" y="0.00" width="8.77" height="8.77" fill="#e8e8ed"/><rect x="0.00" y="8.52" width="8.77" height="8.77" fill="#d0d0d5"/><rect x="8.52" y="8.52" width="8.77" height="8.77" fill="#f2f2f7"/></svg>
<svg style="left:1373.92px;top:932.14px" width="68.16" height="17.04" viewBox="0 0 68.16 17.04" shape-rendering="crispEdges"><rect x="0.00" y="0.00" width="8.77" height="8.77" fill="#b8b8bd"/><rect x="8.52" y="0.00" width="8.77" height="8.77" fill="#d8d8dd"/><rect x="17.04" y="0.00" width="8.77" height="8.77" fill="#f4f4f9"/><rect x="25.56" y="0.00" width="8.77" height="8.77" fill="#e0e0e5"/><rect x="34.08" y="0.00" width="8.77" height="8.77" fill="#ccccd1"/><rect x="42.60" y="0.00" width="8.77" height="8.77" fill="#e0e0e5"/><rect x="51.12" y="0.00" width="8.77" height="8.77" fill="#d8d8dd"/><rect x="59.64" y="0.00" width="8.77" height="8.77" fill="#c0c0c5"/><rect x="0.00" y="8.52" width="8.77" height="8.77" fill="#b4b4b9"/><rect x="8.52" y="8.52" width="8.77" height="8.77" fill="#e4e4e9"/><rect x="17.04" y="8.52" width="8.77" height="8.77" fill="#ffffff"/><rect x="25.56" y="8.52" width="8.77" height="8.77" fill="#d8d8dd"/><rect x="34.08" y="8.52" width="8.77" height="8.77" fill="#ccccd1"/><rect x="42.60" y="8.52" width="8.77" height="8.77" fill="#dcdce1"/><rect x="51.12" y="8.52" width="8.77" height="8.77" fill="#d4d4d9"/><rect x="59.64" y="8.52" width="8.77" height="8.77" fill="#c0c0c5"/></svg>
<svg style="left:1212.04px;top:1000.30px" width="17.04" height="25.56" viewBox="0 0 17.04 25.56" shape-rendering="crispEdges"><rect x="0.00" y="0.00" width="8.77" height="8.77" fill="#e8e8ed"/><rect x="8.52" y="0.00" width="8.77" height="8.77" fill="#f4f4f9"/><rect x="0.00" y="8.52" width="8.77" height="8.77" fill="#c4c4c9"/><rect x="8.52" y="8.52" width="8.77" height="8.77" fill="#dcdce1"/><rect x="0.00" y="17.04" width="8.77" height="8.77" fill="#f2f2f7"/><rect x="8.52" y="17.04" width="8.77" height="8.77" fill="#fafaff"/></svg>
<svg style="left:1373.92px;top:1000.30px" width="85.20" height="25.56" viewBox="0 0 85.20 25.56" shape-rendering="crispEdges"><rect x="0.00" y="0.00" width="8.77" height="8.77" fill="#d8d8dd"/><rect x="8.52" y="0.00" width="8.77" height="8.77" fill="#e4e4e9"/><rect x="17.04" y="0.00" width="8.77" height="8.77" fill="#ffffff"/><rect x="25.56" y="0.00" width="8.77" height="8.77" fill="#e8e8ed"/><rect x="34.08" y="0.00" width="8.77" height="8.77" fill="#eeeef3"/><rect x="42.60" y="0.00" width="8.77" height="8.77" fill="#eeeef3"/><rect x="51.12" y="0.00" width="8.77" height="8.77" fill="#e8e8ed"/><rect x="59.64" y="0.00" width="8.77" height="8.77" fill="#ffffff"/><rect x="68.16" y="0.00" width="8.77" height="8.77" fill="#e8e8ed"/><rect x="76.68" y="0.00" width="8.77" height="8.77" fill="#e8e8ed"/><rect x="0.00" y="8.52" width="8.77" height="8.77" fill="#a8a8ad"/><rect x="8.52" y="8.52" width="8.77" height="8.77" fill="#dcdce1"/><rect x="17.04" y="8.52" width="8.77" height="8.77" fill="#ffffff"/><rect x="25.56" y="8.52" width="8.77" height="8.77" fill="#d4d4d9"/><rect x="34.08" y="8.52" width="8.77" height="8.77" fill="#ececf1"/><rect x="42.60" y="8.52" width="8.77" height="8.77" fill="#d0d0d5"/><rect x="51.12" y="8.52" width="8.77" height="8.77" fill="#d4d4d9"/><rect x="59.64" y="8.52" width="8.77" height="8.77" fill="#d8d8dd"/><rect x="68.16" y="8.52" width="8.77" height="8.77" fill="#bcbcc1"/><rect x="76.68" y="8.52" width="8.77" height="8.77" fill="#a4a4a9"/><rect x="0.00" y="17.04" width="8.77" height="8.77" fill="#f0f0f5"/><rect x="8.52" y="17.04" width="8.77" height="8.77" fill="#fafaff"/><rect x="17.04" y="17.04" width="8.77" height="8.77" fill="#f0f0f5"/><rect x="25.56" y="17.04" width="8.77" height="8.77" fill="#f8f8fd"/><rect x="34.08" y="17.04" width="8.77" height="8.77" fill="#f6f6fb"/><rect x="42.60" y="17.04" width="8.77" height="8.77" fill="#f8f8fd"/><rect x="51.12" y="17.04" width="8.77" height="8.77" fill="#fafaff"/><rect x="59.64" y="17.04" width="8.77" height="8.77" fill="#fafaff"/><rect x="68.16" y="17.04" width="8.77" height="8.77" fill="#fafaff"/><rect x="76.68" y="17.04" width="8.77" height="8.77" fill="#fafaff"/></svg>
<svg style="left:130.00px;top:702.10px" width="144.84" height="25.56" viewBox="0 0 144.84 25.56" shape-rendering="crispEdges"><rect x="0.00" y="0.00" width="8.77" height="8.77" fill="#c8c8cd"/><rect x="8.52" y="0.00" width="8.77" height="8.77" fill="#d8d8dd"/><rect x="17.04" y="0.00" width="8.77" height="8.77" fill="#d8d8dd"/><rect x="25.56" y="0.00" width="8.77" height="8.77" fill="#d0d0d5"/><rect x="34.08" y="0.00" width="8.77" height="8.77" fill="#b0b0b5"/><rect x="42.60" y="0.00" width="8.77" height="8.77" fill="#b8b8bd"/><rect x="51.12" y="0.00" width="8.77" height="8.77" fill="#d4d4d9"/><rect x="59.64" y="0.00" width="8.77" height="8.77" fill="#d8d8dd"/><rect x="68.16" y="0.00" width="8.77" height="8.77" fill="#d4d4d9"/><rect x="76.68" y="0.00" width="8.77" height="8.77" fill="#c0c0c5"/><rect x="85.20" y="0.00" width="8.77" height="8.77" fill="#d8d8dd"/><rect x="93.72" y="0.00" width="8.77" height="8.77" fill="#c8c8cd"/><rect x="102.24" y="0.00" width="8.77" height="8.77" fill="#b8b8bd"/><rect x="110.76" y="0.00" width="8.77" height="8.77" fill="#d8d8dd"/><rect x="119.28" y="0.00" width="8.77" height="8.77" fill="#d4d4d9"/><rect x="127.80" y="0.00" width="8.77" height="8.77" fill="#dcdce1"/><rect x="136.32" y="0.00" width="8.77" height="8.77" fill="#c4c4c9"/><rect x="0.00" y="8.52" width="8.77" height="8.77" fill="#c8c8cd"/><rect x="8.52" y="8.52" width="8.77" height="8.77" fill="#b0b0b5"/><rect x="17.04" y="8.52" width="8.77" height="8.77" fill="#a8a8ad"/><rect x="25.56" y="8.52" width="8.77" height="8.77" fill="#c8c8cd"/><rect x="34.08" y="8.52" width="8.77" height="8.77" fill="#b8b8bd"/><rect x="42.60" y="8.52" width="8.77" height="8.77" fill="#d0d0d5"/><rect x="51.12" y="8.52" width="8.77" height="8.77" fill="#b0b0b5"/><rect x="59.64" y="8.52" width="8.77" height="8.77" fill="#b4b4b9"/><rect x="68.16" y="8.52" width="8.77" height="8.77" fill="#b0b0b5"/><rect x="76.68" y="8.52" width="8.77" height="8.77" fill="#b0b0b5"/><rect x="85.20" y="8.52" width="8.77" height="8.77" fill="#b4b4b9"/><rect x="93.72" y="8.52" width="8.77" height="8.77" fill="#a0a0a5"/><rect x="102.24" y="8.52" width="8.77" height="8.77" fill="#d4d4d9"/><rect x="110.76" y="8.52" width="8.77" height="8.77" fill="#b0b0b5"/><rect x="119.28" y="8.52" width="8.77" height="8.77" fill="#b0b0b5"/><rect x="127.80" y="8.52" width="8.77" height="8.77" fill="#d0d0d5"/><rect x="136.32" y="8.52" width="8.77" height="8.77" fill="#909095"/><rect x="85.20" y="17.04" width="8.77" height="8.77" fill="#fafaff"/><rect x="93.72" y="17.04" width="8.77" height="8.77" fill="#f8f8fd"/><rect x="136.32" y="17.04" width="8.77" height="8.77" fill="#f0f0f5"/></svg>
<svg style="left:130.00px;top:727.66px" width="85.20" height="17.04" viewBox="0 0 85.20 17.04" shape-rendering="crispEdges"><rect x="0.00" y="0.00" width="8.77" height="8.77" fill="#e0e1e6"/><rect x="8.52" y="0.00" width="8.77" height="8.77" fill="#e0e1e6"/><rect x="17.04" y="0.00" width="8.77" height="8.77" fill="#e2e3e8"/><rect x="25.56" y="0.00" width="8.77" height="8.77" fill="#f2f3f8"/><rect x="34.08" y="0.00" width="8.77" height="8.77" fill="#dedfe4"/><rect x="42.60" y="0.00" width="8.77" height="8.77" fill="#e6e7ec"/><rect x="51.12" y="0.00" width="8.77" height="8.77" fill="#e0e1e6"/><rect x="59.64" y="0.00" width="8.77" height="8.77" fill="#dedfe4"/><rect x="68.16" y="0.00" width="8.77" height="8.77" fill="#e2e3e8"/><rect x="76.68" y="0.00" width="8.77" height="8.77" fill="#e6e7ec"/><rect x="0.00" y="8.52" width="8.77" height="8.77" fill="#f4f5fa"/><rect x="8.52" y="8.52" width="8.77" height="8.77" fill="#eaebf0"/><rect x="17.04" y="8.52" width="8.77" height="8.77" fill="#ecedf2"/><rect x="25.56" y="8.52" width="8.77" height="8.77" fill="#f4f5fa"/><rect x="34.08" y="8.52" width="8.77" height="8.77" fill="#eeeff4"/><rect x="42.60" y="8.52" width="8.77" height="8.77" fill="#eaebf0"/><rect x="51.12" y="8.52" width="8.77" height="8.77" fill="#f4f5fa"/><rect x="59.64" y="8.52" width="8.77" height="8.77" fill="#e8e9ee"/><rect x="68.16" y="8.52" width="8.77" height="8.77" fill="#eaebf0"/><rect x="76.68" y="8.52" width="8.77" height="8.77" fill="#f0f1f6"/></svg>
<svg style="left:130.00px;top:770.26px" width="153.36" height="34.08" viewBox="0 0 153.36 34.08" shape-rendering="crispEdges"><rect x="8.52" y="0.00" width="8.77" height="8.77" fill="#fcfcff"/><rect x="17.04" y="0.00" width="8.77" height="8.77" fill="#eeeef3"/><rect x="25.56" y="0.00" width="8.77" height="8.77" fill="#eeeef3"/><rect x="34.08" y="0.00" width="8.77" height="8.77" fill="#f4f4f9"/><rect x="42.60" y="0.00" width="8.77" height="8.77" fill="#f4f4f9"/><rect x="51.12" y="0.00" width="8.77" height="8.77" fill="#eeeef3"/><rect x="59.64" y="0.00" width="8.77" height="8.77" fill="#eeeef3"/><rect x="68.16" y="0.00" width="8.77" height="8.77" fill="#f4f4f9"/><rect x="76.68" y="0.00" width="8.77" height="8.77" fill="#f6f6fb"/><rect x="85.20" y="0.00" width="8.77" height="8.77" fill="#eaeaef"/><rect x="93.72" y="0.00" width="8.77" height="8.77" fill="#e8e8ed"/><rect x="102.24" y="0.00" width="8.77" height="8.77" fill="#f0f0f5"/><rect x="110.76" y="0.00" width="8.77" height="8.77" fill="#f0f0f5"/><rect x="119.28" y="0.00" width="8.77" height="8.77" fill="#eeeef3"/><rect x="127.80" y="0.00" width="8.77" height="8.77" fill="#ececf1"/><rect x="136.32" y="0.00" width="8.77" height="8.77" fill="#f4f4f9"/><rect x="144.84" y="0.00" width="8.77" height="8.77" fill="#f8f8fd"/><rect x="0.00" y="8.52" width="8.77" height="8.77" fill="#d4d4d9"/><rect x="8.52" y="8.52" width="8.77" height="8.77" fill="#b0b0b5"/><rect x="17.04" y="8.52" width="8.77" height="8.77" fill="#a8a8ad"/><rect x="25.56" y="8.52" width="8.77" height="8.77" fill="#a0a0a5"/><rect x="34.08" y="8.52" width="8.77" height="8.77" fill="#a8a8ad"/><rect x="42.60" y="8.52" width="8.77" height="8.77" fill="#acacb1"/><rect x="51.12" y="8.52" width="8.77" height="8.77" fill="#acacb1"/><rect x="59.64" y="8.52" width="8.77" height="8.77" fill="#b0b0b5"/><rect x="68.16" y="8.52" width="8.77" height="8.77" fill="#c4c4c9"/><rect x="76.68" y="8.52" width="8.77" height="8.77" fill="#a4a4a9"/><rect x="85.20" y="8.52" width="8.77" height="8.77" fill="#acacb1"/><rect x="93.72" y="8.52" width="8.77" height="8.77" fill="#a0a0a5"/><rect x="102.24" y="8.52" width="8.77" height="8.77" fill="#b4b4b9"/><rect x="110.76" y="8.52" width="8.77" height="8.77" fill="#acacb1"/><rect x="119.28" y="8.52" width="8.77" height="8.77" fill="#acacb1"/><rect x="127.80" y="8.52" width="8.77" height="8.77" fill="#a8a8ad"/><rect x="136.32" y="8.52" width="8.77" height="8.77" fill="#c4c4c9"/><rect x="144.84" y="8.52" width="8.77" height="8.77" fill="#d4d4d9"/><rect x="0.00" y="17.04" width="8.77" height="8.77" fill="#f6f6fb"/><rect x="8.52" y="17.04" width="8.77" height="8.77" fill="#f0f0f5"/><rect x="17.04" y="17.04" width="8.77" height="8.77" fill="#d8d8dd"/><rect x="25.56" y="17.04" width="8.77" height="8.77" fill="#d4d4d9"/><rect x="34.08" y="17.04" width="8.77" height="8.77" fill="#e2e2e7"/><rect x="42.60" y="17.04" width="8.77" height="8.77" fill="#e2e2e7"/><rect x="51.12" y="17.04" width="8.77" height="8.77" fill="#dcdce1"/><rect x="59.64" y="17.04" width="8.77" height="8.77" fill="#d8d8dd"/><rect x="68.16" y="17.04" width="8.77" height="8.77" fill="#e6e6eb"/><rect x="76.68" y="17.04" width="8.77" height="8.77" fill="#e0e0e5"/><rect x="85.20" y="17.04" width="8.77" height="8.77" fill="#dcdce1"/><rect x="93.72" y="17.04" width="8.77" height="8.77" fill="#d8d8dd"/><rect x="102.24" y="17.04" width="8.77" height="8.77" fill="#e4e4e9"/><rect x="110.76" y="17.04" width="8.77" height="8.77" fill="#e0e0e5"/><rect x="119.28" y="17.04" width="8.77" height="8.77" fill="#e0e0e5"/><rect x="127.80" y="17.04" width="8.77" height="8.77" fill="#d8d8dd"/><rect x="136.32" y="17.04" width="8.77" height="8.77" fill="#e0e0e5"/><rect x="144.84" y="17.04" width="8.77" height="8.77" fill="#f0f0f5"/><rect x="0.00" y="25.56" width="8.77" height="8.77" fill="#f6f6fb"/><rect x="8.52" y="25.56" width="8.77" height="8.77" fill="#fafaff"/><rect x="17.04" y="25.56" width="8.77" height="8.77" fill="#fcfcff"/><rect x="25.56" y="25.56" width="8.77" height="8.77" fill="#fcfcff"/><rect x="34.08" y="25.56" width="8.77" height="8.77" fill="#fcfcff"/><rect x="51.12" y="25.56" width="8.77" height="8.77" fill="#fcfcff"/><rect x="59.64" y="25.56" width="8.77" height="8.77" fill="#fcfcff"/><rect x="76.68" y="25.56" width="8.77" height="8.77" fill="#f8f8fd"/></svg>
<svg style="left:130.00px;top:804.34px" width="85.20" height="8.52" viewBox="0 0 85.20 8.52" shape-rendering="crispEdges"><rect x="0.00" y="0.00" width="8.77" height="8.77" fill="#e0e1e6"/><rect x="8.52" y="0.00" width="8.77" height="8.77" fill="#cecfd4"/><rect x="17.04" y="0.00" width="8.77" height="8.77" fill="#d0d1d6"/><rect x="25.56" y="0.00" width="8.77" height="8.77" fill="#eeeff4"/><rect x="34.08" y="0.00" width="8.77" height="8.77" fill="#d0d1d6"/><rect x="42.60" y="0.00" width="8.77" height="8.77" fill="#d0d1d6"/><rect x="51.12" y="0.00" width="8.77" height="8.77" fill="#dadbe0"/><rect x="59.64" y="0.00" width="8.77" height="8.77" fill="#cacbd0"/><rect x="68.16" y="0.00" width="8.77" height="8.77" fill="#cecfd4"/><rect x="76.68" y="0.00" width="8.77" height="8.77" fill="#e0e1e6"/></svg>
<svg style="left:130.00px;top:846.94px" width="110.76" height="17.04" viewBox="0 0 110.76 17.04" shape-rendering="crispEdges"><rect x="0.00" y="0.00" width="8.77" height="8.77" fill="#f2f2f7"/><rect x="8.52" y="0.00" width="8.77" height="8.77" fill="#eaeaef"/><rect x="17.04" y="0.00" width="8.77" height="8.77" fill="#eeeef3"/><rect x="25.56" y="0.00" width="8.77" height="8.77" fill="#eaeaef"/><rect x="34.08" y="0.00" width="8.77" height="8.77" fill="#d0d0d5"/><rect x="42.60" y="0.00" width="8.77" height="8.77" fill="#ececf1"/><rect x="51.12" y="0.00" width="8.77" height="8.77" fill="#ececf1"/><rect x="59.64" y="0.00" width="8.77" height="8.77" fill="#e8e8ed"/><rect x="68.16" y="0.00" width="8.77" height="8.77" fill="#c8c8cd"/><rect x="76.68" y="0.00" width="8.77" height="8.77" fill="#f0f0f5"/><rect x="85.20" y="0.00" width="8.77" height="8.77" fill="#f2f2f7"/><rect x="93.72" y="0.00" width="8.77" height="8.77" fill="#f2f2f7"/><rect x="102.24" y="0.00" width="8.77" height="8.77" fill="#c4c4c9"/><rect x="0.00" y="8.52" width="8.77" height="8.77" fill="#bcbcc1"/><rect x="8.52" y="8.52" width="8.77" height="8.77" fill="#a8a8ad"/><rect x="17.04" y="8.52" width="8.77" height="8.77" fill="#a0a0a5"/><rect x="25.56" y="8.52" width="8.77" height="8.77" fill="#b4b4b9"/><rect x="34.08" y="8.52" width="8.77" height="8.77" fill="#b4b4b9"/><rect x="42.60" y="8.52" width="8.77" height="8.77" fill="#acacb1"/><rect x="51.12" y="8.52" width="8.77" height="8.77" fill="#a4a4a9"/><rect x="59.64" y="8.52" width="8.77" height="8.77" fill="#a4a4a9"/><rect x="68.16" y="8.52" width="8.77" height="8.77" fill="#a8a8ad"/><rect x="76.68" y="8.52" width="8.77" height="8.77" fill="#a8a8ad"/><rect x="85.20" y="8.52" width="8.77" height="8.77" fill="#b8b8bd"/><rect x="93.72" y="8.52" width="8.77" height="8.77" fill="#bcbcc1"/><rect x="102.24" y="8.52" width="8.77" height="8.77" fill="#acacb1"/></svg>
<svg style="left:130.00px;top:872.50px" width="85.20" height="17.04" viewBox="0 0 85.20 17.04" shape-rendering="crispEdges"><rect x="0.00" y="0.00" width="8.77" height="8.77" fill="#e4e5ea"/><rect x="8.52" y="0.00" width="8.77" height="8.77" fill="#e8e9ee"/><rect x="17.04" y="0.00" width="8.77" height="8.77" fill="#e6e7ec"/><rect x="25.56" y="0.00" width="8.77" height="8.77" fill="#f2f3f8"/><rect x="34.08" y="0.00" width="8.77" height="8.77" fill="#e2e3e8"/><rect x="42.60" y="0.00" width="8.77" height="8.77" fill="#eeeff4"/><rect x="51.12" y="0.00" width="8.77" height="8.77" fill="#e6e7ec"/><rect x="59.64" y="0.00" width="8.77" height="8.77" fill="#e6e7ec"/><rect x="68.16" y="0.00" width="8.77" height="8.77" fill="#eaebf0"/><rect x="76.68" y="0.00" width="8.77" height="8.77" fill="#eaebf0"/><rect x="0.00" y="8.52" width="8.77" height="8.77" fill="#eeeff4"/><rect x="8.52" y="8.52" width="8.77" height="8.77" fill="#dedfe4"/><rect x="17.04" y="8.52" width="8.77" height="8.77" fill="#e6e7ec"/><rect x="25.56" y="8.52" width="8.77" height="8.77" fill="#f2f3f8"/><rect x="34.08" y="8.52" width="8.77" height="8.77" fill="#e6e7ec"/><rect x="42.60" y="8.52" width="8.77" height="8.77" fill="#e2e3e8"/><rect x="51.12" y="8.52" width="8.77" height="8.77" fill="#eeeff4"/><rect x="59.64" y="8.52" width="8.77" height="8.77" fill="#e0e1e6"/><rect x="68.16" y="8.52" width="8.77" height="8.77" fill="#e2e3e8"/><rect x="76.68" y="8.52" width="8.77" height="8.77" fill="#ecedf2"/></svg>
<svg style="left:130.00px;top:915.10px" width="153.36" height="34.08" viewBox="0 0 153.36 34.08" shape-rendering="crispEdges"><rect x="8.52" y="0.00" width="8.77" height="8.77" fill="#fafaff"/><rect x="51.12" y="0.00" width="8.77" height="8.77" fill="#f8f8fd"/><rect x="85.20" y="0.00" width="8.77" height="8.77" fill="#f6f6fb"/><rect x="8.52" y="8.52" width="8.77" height="8.77" fill="#a8a8ad"/><rect x="17.04" y="8.52" width="8.77" height="8.77" fill="#b8b8bd"/><rect x="25.56" y="8.52" width="8.77" height="8.77" fill="#bcbcc1"/><rect x="34.08" y="8.52" width="8.77" height="8.77" fill="#a8a8ad"/><rect x="42.60" y="8.52" width="8.77" height="8.77" fill="#b8b8bd"/><rect x="51.12" y="8.52" width="8.77" height="8.77" fill="#98989d"/><rect x="59.64" y="8.52" width="8.77" height="8.77" fill="#b8b8bd"/><rect x="68.16" y="8.52" width="8.77" height="8.77" fill="#b8b8bd"/><rect x="76.68" y="8.52" width="8.77" height="8.77" fill="#d8d8dd"/><rect x="85.20" y="8.52" width="8.77" height="8.77" fill="#acacb1"/><rect x="93.72" y="8.52" width="8.77" height="8.77" fill="#a0a0a5"/><rect x="102.24" y="8.52" width="8.77" height="8.77" fill="#b4b4b9"/><rect x="110.76" y="8.52" width="8.77" height="8.77" fill="#c0c0c5"/><rect x="119.28" y="8.52" width="8.77" height="8.77" fill="#acacb1"/><rect x="127.80" y="8.52" width="8.77" height="8.77" fill="#acacb1"/><rect x="136.32" y="8.52" width="8.77" height="8.77" fill="#c8c8cd"/><rect x="144.84" y="8.52" width="8.77" height="8.77" fill="#b0b0b5"/><rect x="0.00" y="17.04" width="8.77" height="8.77" fill="#dcdce1"/><rect x="8.52" y="17.04" width="8.77" height="8.77" fill="#d4d4d9"/><rect x="17.04" y="17.04" width="8.77" height="8.77" fill="#d4d4d9"/><rect x="25.56" y="17.04" width="8.77" height="8.77" fill="#e6e6eb"/><rect x="34.08" y="17.04" width="8.77" height="8.77" fill="#c4c4c9"/><rect x="42.60" y="17.04" width="8.77" height="8.77" fill="#e6e6eb"/><rect x="51.12" y="17.04" width="8.77" height="8.77" fill="#d4d4d9"/><rect x="59.64" y="17.04" width="8.77" height="8.77" fill="#d4d4d9"/><rect x="68.16" y="17.04" width="8.77" height="8.77" fill="#dcdce1"/><rect x="76.68" y="17.04" width="8.77" height="8.77" fill="#eeeef3"/><rect x="85.20" y="17.04" width="8.77" height="8.77" fill="#d4d4d9"/><rect x="93.72" y="17.04" width="8.77" height="8.77" fill="#d6d6db"/><rect x="102.24" y="17.04" width="8.77" height="8.77" fill="#dcdce1"/><rect x="110.76" y="17.04" width="8.77" height="8.77" fill="#e0e0e5"/><rect x="119.28" y="17.04" width="8.77" height="8.77" fill="#e0e0e5"/><rect x="127.80" y="17.04" width="8.77" height="8.77" fill="#d4d4d9"/><rect x="136.32" y="17.04" width="8.77" height="8.77" fill="#ececf1"/><rect x="144.84" y="17.04" width="8.77" height="8.77" fill="#d0d0d5"/><rect x="0.00" y="25.56" width="8.77" height="8.77" fill="#fafaff"/><rect x="8.52" y="25.56" width="8.77" height="8.77" fill="#fafaff"/><rect x="17.04" y="25.56" width="8.77" height="8.77" fill="#fafaff"/><rect x="25.56" y="25.56" width="8.77" height="8.77" fill="#fcfcff"/><rect x="34.08" y="25.56" width="8.77" height="8.77" fill="#fafaff"/><rect x="42.60" y="25.56" width="8.77" height="8.77" fill="#fafaff"/><rect x="51.12" y="25.56" width="8.77" height="8.77" fill="#fcfcff"/><rect x="59.64" y="25.56" width="8.77" height="8.77" fill="#fafaff"/><rect x="68.16" y="25.56" width="8.77" height="8.77" fill="#fafaff"/><rect x="76.68" y="25.56" width="8.77" height="8.77" fill="#fafaff"/></svg>
<svg style="left:130.00px;top:949.18px" width="85.20" height="17.04" viewBox="0 0 85.20 17.04" shape-rendering="crispEdges"><rect x="0.00" y="0.00" width="8.77" height="8.77" fill="#e0e1e6"/><rect x="8.52" y="0.00" width="8.77" height="8.77" fill="#cacbd0"/><rect x="17.04" y="0.00" width="8.77" height="8.77" fill="#d2d3d8"/><rect x="25.56" y="0.00" width="8.77" height="8.77" fill="#eeeff4"/><rect x="34.08" y="0.00" width="8.77" height="8.77" fill="#d2d3d8"/><rect x="42.60" y="0.00" width="8.77" height="8.77" fill="#d4d5da"/><rect x="51.12" y="0.00" width="8.77" height="8.77" fill="#d8d9de"/><rect x="59.64" y="0.00" width="8.77" height="8.77" fill="#cacbd0"/><rect x="68.16" y="0.00" width="8.77" height="8.77" fill="#cecfd4"/><rect x="76.68" y="0.00" width="8.77" height="8.77" fill="#e0e1e6"/><rect x="0.00" y="8.52" width="8.77" height="8.77" fill="#fcfdff"/><rect x="8.52" y="8.52" width="8.77" height="8.77" fill="#fcfdff"/><rect x="17.04" y="8.52" width="8.77" height="8.77" fill="#fcfdff"/><rect x="34.08" y="8.52" width="8.77" height="8.77" fill="#fcfdff"/><rect x="42.60" y="8.52" width="8.77" height="8.77" fill="#fcfdff"/><rect x="59.64" y="8.52" width="8.77" height="8.77" fill="#fafbff"/><rect x="68.16" y="8.52" width="8.77" height="8.77" fill="#fafbff"/><rect x="76.68" y="8.52" width="8.77" height="8.77" fill="#fcfdff"/></svg>
<svg style="left:130.00px;top:1000.30px" width="102.24" height="25.56" viewBox="0 0 102.24 25.56" shape-rendering="crispEdges"><rect x="0.00" y="0.00" width="8.77" height="8.77" fill="#e4e4e9"/><rect x="8.52" y="0.00" width="8.77" height="8.77" fill="#eaeaef"/><rect x="25.56" y="0.00" width="8.77" height="8.77" fill="#f2f2f7"/><rect x="34.08" y="0.00" width="8.77" height="8.77" fill="#eeeef3"/><rect x="51.12" y="0.00" width="8.77" height="8.77" fill="#e2e2e7"/><rect x="59.64" y="0.00" width="8.77" height="8.77" fill="#dcdce1"/><rect x="68.16" y="0.00" width="8.77" height="8.77" fill="#fafaff"/><rect x="0.00" y="8.52" width="8.77" height="8.77" fill="#bcbcc1"/><rect x="8.52" y="8.52" width="8.77" height="8.77" fill="#b8b8bd"/><rect x="17.04" y="8.52" width="8.77" height="8.77" fill="#b4b4b9"/><rect x="25.56" y="8.52" width="8.77" height="8.77" fill="#a4a4a9"/><rect x="34.08" y="8.52" width="8.77" height="8.77" fill="#a4a4a9"/><rect x="42.60" y="8.52" width="8.77" height="8.77" fill="#d0d0d5"/><rect x="51.12" y="8.52" width="8.77" height="8.77" fill="#c4c4c9"/><rect x="59.64" y="8.52" width="8.77" height="8.77" fill="#c0c0c5"/><rect x="68.16" y="8.52" width="8.77" height="8.77" fill="#b4b4b9"/><rect x="76.68" y="8.52" width="8.77" height="8.77" fill="#909095"/><rect x="85.20" y="8.52" width="8.77" height="8.77" fill="#b0b0b5"/><rect x="93.72" y="8.52" width="8.77" height="8.77" fill="#d8d8dd"/><rect x="0.00" y="17.04" width="8.77" height="8.77" fill="#f0f0f5"/><rect x="8.52" y="17.04" width="8.77" height="8.77" fill="#e8e8ed"/><rect x="17.04" y="17.04" width="8.77" height="8.77" fill="#f6f6fb"/><rect x="25.56" y="17.04" width="8.77" height="8.77" fill="#f0f0f5"/><rect x="34.08" y="17.04" width="8.77" height="8.77" fill="#e2e2e7"/><rect x="42.60" y="17.04" width="8.77" height="8.77" fill="#f2f2f7"/><rect x="51.12" y="17.04" width="8.77" height="8.77" fill="#f0f0f5"/><rect x="59.64" y="17.04" width="8.77" height="8.77" fill="#eeeef3"/><rect x="68.16" y="17.04" width="8.77" height="8.77" fill="#f4f4f9"/><rect x="76.68" y="17.04" width="8.77" height="8.77" fill="#e8e8ed"/><rect x="85.20" y="17.04" width="8.77" height="8.77" fill="#f4f4f9"/><rect x="93.72" y="17.04" width="8.77" height="8.77" fill="#f6f6fb"/></svg>
<div style="left:407.00px;top:1004.50px;width:393.00px;height:4.20px;background:#a9a9ac"></div>
<div style="left:407.00px;top:1008.70px;width:393.00px;height:17.10px;background:#eeeeef"></div>
<div style="left:407.00px;top:1025.80px;width:393.00px;height:8.50px;background:#f8f8f9"></div>
<svg style="left:419.68px;top:1008.82px" width="187.44" height="17.04" viewBox="0 0 187.44 17.04" shape-rendering="crispEdges"><rect x="0.00" y="0.00" width="8.77" height="8.77" fill="#f0e2c8"/><rect x="8.52" y="0.00" width="8.77" height="8.77" fill="#ecc890"/><rect x="17.04" y="0.00" width="8.77" height="8.77" fill="#d8ccb0"/><rect x="25.56" y="0.00" width="8.77" height="8.77" fill="#c0b8a8"/><rect x="34.08" y="0.00" width="8.77" height="8.77" fill="#c4bca8"/><rect x="42.60" y="0.00" width="8.77" height="8.77" fill="#b8b0a0"/><rect x="51.12" y="0.00" width="8.77" height="8.77" fill="#c4bca8"/><rect x="59.64" y="0.00" width="8.77" height="8.77" fill="#bcb4a0"/><rect x="68.16" y="0.00" width="8.77" height="8.77" fill="#c8c0a8"/><rect x="76.68" y="0.00" width="8.77" height="8.77" fill="#d8ccb0"/><rect x="85.20" y="0.00" width="8.77" height="8.77" fill="#d0c4ac"/><rect x="93.72" y="0.00" width="8.77" height="8.77" fill="#c0b8a4"/><rect x="102.24" y="0.00" width="8.77" height="8.77" fill="#c4b8a4"/><rect x="110.76" y="0.00" width="8.77" height="8.77" fill="#b8b09c"/><rect x="119.28" y="0.00" width="8.77" height="8.77" fill="#d4c8b0"/><rect x="127.80" y="0.00" width="8.77" height="8.77" fill="#c0b8a4"/><rect x="136.32" y="0.00" width="8.77" height="8.77" fill="#c4bca4"/><rect x="144.84" y="0.00" width="8.77" height="8.77" fill="#b8ac9c"/><rect x="153.36" y="0.00" width="8.77" height="8.77" fill="#c4b8a4"/><rect x="161.88" y="0.00" width="8.77" height="8.77" fill="#c4b8a0"/><rect x="170.40" y="0.00" width="8.77" height="8.77" fill="#dcccac"/><rect x="178.92" y="0.00" width="8.77" height="8.77" fill="#f0e4cc"/><rect x="0.00" y="8.52" width="8.77" height="8.77" fill="#f4e8d0"/><rect x="8.52" y="8.52" width="8.77" height="8.77" fill="#f4e0b8"/><rect x="17.04" y="8.52" width="8.77" height="8.77" fill="#ecdcb8"/><rect x="25.56" y="8.52" width="8.77" height="8.77" fill="#e4d4b4"/><rect x="34.08" y="8.52" width="8.77" height="8.77" fill="#ecdcb8"/><rect x="42.60" y="8.52" width="8.77" height="8.77" fill="#dccdb0"/><rect x="51.12" y="8.52" width="8.77" height="8.77" fill="#ecdcb8"/><rect x="59.64" y="8.52" width="8.77" height="8.77" fill="#e8d8b4"/><rect x="68.16" y="8.52" width="8.77" height="8.77" fill="#d4c8ac"/><rect x="76.68" y="8.52" width="8.77" height="8.77" fill="#e4d4b4"/><rect x="85.20" y="8.52" width="8.77" height="8.77" fill="#e4d8b8"/><rect x="93.72" y="8.52" width="8.77" height="8.77" fill="#e4d8b8"/><rect x="102.24" y="8.52" width="8.77" height="8.77" fill="#e4d4b4"/><rect x="110.76" y="8.52" width="8.77" height="8.77" fill="#e4d8b8"/><rect x="119.28" y="8.52" width="8.77" height="8.77" fill="#ecdcb8"/><rect x="127.80" y="8.52" width="8.77" height="8.77" fill="#ecdcb8"/><rect x="136.32" y="8.52" width="8.77" height="8.77" fill="#e8d8b8"/><rect x="144.84" y="8.52" width="8.77" height="8.77" fill="#e8d8b8"/><rect x="153.36" y="8.52" width="8.77" height="8.77" fill="#e4d4b4"/><rect x="161.88" y="8.52" width="8.77" height="8.77" fill="#e8d8b4"/><rect x="170.40" y="8.52" width="8.77" height="8.77" fill="#f0dcb0"/><rect x="178.92" y="8.52" width="8.77" height="8.77" fill="#f4e8d0"/></svg>
<svg style="left:675.28px;top:1008.82px" width="59.64" height="17.04" viewBox="0 0 59.64 17.04" shape-rendering="crispEdges"><rect x="0.00" y="0.00" width="8.77" height="8.77" fill="#c8c8cd"/><rect x="8.52" y="0.00" width="8.77" height="8.77" fill="#c0c0c5"/><rect x="17.04" y="0.00" width="8.77" height="8.77" fill="#a8a8ad"/><rect x="25.56" y="0.00" width="8.77" height="8.77" fill="#a0a0a5"/><rect x="34.08" y="0.00" width="8.77" height="8.77" fill="#a8a8ad"/><rect x="42.60" y="0.00" width="8.77" height="8.77" fill="#98989d"/><rect x="51.12" y="0.00" width="8.77" height="8.77" fill="#c4c4c9"/><rect x="0.00" y="8.52" width="8.77" height="8.77" fill="#ececf1"/><rect x="8.52" y="8.52" width="8.77" height="8.77" fill="#e0e0e5"/><rect x="17.04" y="8.52" width="8.77" height="8.77" fill="#e4e4e9"/><rect x="25.56" y="8.52" width="8.77" height="8.77" fill="#e4e4e9"/><rect x="34.08" y="8.52" width="8.77" height="8.77" fill="#e0e0e5"/><rect x="42.60" y="8.52" width="8.77" height="8.77" fill="#e0e0e5"/><rect x="51.12" y="8.52" width="8.77" height="8.77" fill="#ececf1"/></svg>
<div style="left:82.20px;top:711.73px;width:19.60px;height:19.60px;border:2px solid #d3d6e5;border-radius:5px;background:#fff"></div>
<div style="left:82.20px;top:784.57px;width:19.60px;height:19.60px;border:2px solid #d3d6e5;border-radius:5px;background:#fff"></div>
<div style="left:82.20px;top:857.42px;width:19.60px;height:19.60px;border:2px solid #d3d6e5;border-radius:5px;background:#fff"></div>
<div style="left:82.20px;top:930.27px;width:19.60px;height:19.60px;border:2px solid #d3d6e5;border-radius:5px;background:#fff"></div>
<div style="left:82.20px;top:1003.12px;width:19.60px;height:19.60px;border:2px solid #d3d6e5;border-radius:5px;background:#fff"></div>
<span class="t" style="left:677.60px;top:640.00px;font-size:17.5px;line-height:17.5px;color:#2b2f3c;letter-spacing:0.361px;">United States</span>
<span class="t" style="left:677.70px;top:933.00px;font-size:17.5px;line-height:17.5px;color:#2b2f3c;">Taiwan</span>
<div style="left:421.40px;top:921.00px;width:110.00px;height:29.00px;background:#e9f7ef;border-radius:14px"></div>
<span class="t" style="left:441.30px;top:933.00px;font-size:16.0px;line-height:16.0px;color:#2b2f3c;letter-spacing:0.073px;">Subscribed</span>
<div style="left:430.00px;top:936.50px;width:7.00px;height:7.00px;background:#2b2f3c;border-radius:50%"></div>
<span class="t" style="left:903.50px;top:712.00px;font-size:17.5px;line-height:17.5px;color:#2b2f3c;">y</span>
<div style="left:65.30px;top:71.30px;width:323.40px;height:625.20px;background:#fff;border:1px solid #e2e4ef;border-radius:5px;box-shadow:0 8px 20px rgba(30,35,70,.10),0 1px 3px rgba(30,35,70,.04)"></div>
<div style="left:81.20px;top:84.40px;width:291.80px;height:44.60px;background:#fff;border:1px solid #8fa3fa;border-radius:5px"></div>
<svg style="left:94px;top:95px" width="24" height="24" viewBox="94 95 24 24"><circle cx="103.7" cy="104.45" r="6.2" fill="none" stroke="#333846" stroke-width="1.6"/><path d="M108.3 109 L114.5 114.9" stroke="#333846" stroke-width="2.0" stroke-linecap="round"/></svg>
<div style="left:126.20px;top:97.00px;width:1.80px;height:19.80px;background:#5b7cf7"></div>
<span class="t" style="left:128.40px;top:100.00px;font-size:17.5px;line-height:17.5px;color:#bcc1d3;letter-spacing:-0.251px;">Search</span>
<span class="t" style="left:122.30px;top:165.00px;font-size:17.4px;line-height:17.4px;color:#1f2230;letter-spacing:0.727px;-webkit-text-stroke:0.42px #1f2230;">Frequently used</span>
<svg style="left:353px;top:165.60px" width="16" height="16" viewBox="-8 -8 16 16"><path d="M-2.2 -4.5 L2.3 0 L-2.2 4.5" fill="none" stroke="#1b1e2b" stroke-width="2" stroke-linecap="round" stroke-linejoin="round"/></svg>
<span class="t" style="left:122.30px;top:226.00px;font-size:17.4px;line-height:17.4px;color:#1f2230;letter-spacing:0.708px;-webkit-text-stroke:0.42px #1f2230;">Customer value</span>
<svg style="left:353px;top:227.00px" width="16" height="16" viewBox="-8 -8 16 16"><path d="M-2.2 -4.5 L2.3 0 L-2.2 4.5" fill="none" stroke="#1b1e2b" stroke-width="2" stroke-linecap="round" stroke-linejoin="round"/></svg>
<span class="t" style="left:122.30px;top:288.00px;font-size:17.4px;line-height:17.4px;color:#1f2230;letter-spacing:0.630px;-webkit-text-stroke:0.42px #1f2230;">Basic details</span>
<svg style="left:353px;top:288.40px" width="16" height="16" viewBox="-8 -8 16 16"><path d="M-2.2 -4.5 L2.3 0 L-2.2 4.5" fill="none" stroke="#1b1e2b" stroke-width="2" stroke-linecap="round" stroke-linejoin="round"/></svg>
<span class="t" style="left:122.30px;top:349.00px;font-size:17.4px;line-height:17.4px;color:#1f2230;letter-spacing:0.764px;-webkit-text-stroke:0.42px #1f2230;">Shopping features</span>
<svg style="left:353px;top:349.80px" width="16" height="16" viewBox="-8 -8 16 16"><path d="M-2.2 -4.5 L2.3 0 L-2.2 4.5" fill="none" stroke="#1b1e2b" stroke-width="2" stroke-linecap="round" stroke-linejoin="round"/></svg>
<span class="t" style="left:122.30px;top:410.00px;font-size:17.4px;line-height:17.4px;color:#1f2230;letter-spacing:0.656px;-webkit-text-stroke:0.42px #1f2230;">Store behaviors</span>
<svg style="left:353px;top:411.20px" width="16" height="16" viewBox="-8 -8 16 16"><path d="M-2.2 -4.5 L2.3 0 L-2.2 4.5" fill="none" stroke="#1b1e2b" stroke-width="2" stroke-linecap="round" stroke-linejoin="round"/></svg>
<span class="t" style="left:122.30px;top:472.00px;font-size:17.4px;line-height:17.4px;color:#1f2230;letter-spacing:0.836px;-webkit-text-stroke:0.42px #1f2230;">Promotion sensitivity</span>
<svg style="left:353px;top:472.60px" width="16" height="16" viewBox="-8 -8 16 16"><path d="M-2.2 -4.5 L2.3 0 L-2.2 4.5" fill="none" stroke="#1b1e2b" stroke-width="2" stroke-linecap="round" stroke-linejoin="round"/></svg>
<span class="t" style="left:122.30px;top:533.00px;font-size:17.4px;line-height:17.4px;color:#1f2230;letter-spacing:0.915px;-webkit-text-stroke:0.42px #1f2230;">Metafields</span>
<svg style="left:353px;top:534.00px" width="16" height="16" viewBox="-8 -8 16 16"><path d="M-2.2 -4.5 L2.3 0 L-2.2 4.5" fill="none" stroke="#1b1e2b" stroke-width="2" stroke-linecap="round" stroke-linejoin="round"/></svg>
<div style="left:66.30px;top:572.70px;width:321.40px;height:1.00px;background:#ebecf2"></div>
<span class="t" style="left:122.30px;top:597.00px;font-size:17.4px;line-height:17.4px;color:#1f2230;letter-spacing:0.760px;-webkit-text-stroke:0.42px #1f2230;">Group templates</span>
<span class="t" style="left:122.30px;top:658.00px;font-size:17.4px;line-height:17.4px;color:#3d6af5;letter-spacing:0.817px;-webkit-text-stroke:0.42px #3d6af5;">Advanced filter mode</span>
<svg style="left:86px;top:160px" width="26" height="26" viewBox="86 160 26 26"><path d="M98.65 164.45 L101.32 169.47 L106.92 170.46 L102.98 174.56 L103.76 180.19 L98.65 177.70 L93.54 180.19 L94.32 174.56 L90.38 170.46 L95.98 169.47 Z" fill="#242736" stroke="#242736" stroke-width="2.7" stroke-linejoin="round"/></svg>
<svg style="left:86px;top:222px" width="26" height="24" viewBox="86 222 26 24"><g transform="translate(0 0)" fill="#242736"><circle cx="93.7" cy="229.7" r="3.0"/><circle cx="103.8" cy="229.7" r="3.0"/><path d="M88.1 240.5 C88.3 236.5 90 233.7 93 233.7 L95.6 233.7 C93.5 235.5 92.4 238 92.2 240.5 Z"/><path d="M109.4 240.5 C109.2 236.5 107.5 233.7 104.5 233.7 L101.9 233.7 C104 235.5 105.1 238 105.3 240.5 Z"/><g stroke="#fff" stroke-width="1.7" paint-order="stroke"><circle cx="98.75" cy="231.3" r="3.65"/><path d="M92.9 240.9 C92.9 237.1 95.2 235.3 98.75 235.3 C102.3 235.3 104.6 237.1 104.6 240.9 Q104.6 241.7 103.8 241.7 L93.7 241.7 Q92.9 241.7 92.9 240.9 Z"/></g></g></svg>
<svg style="left:86px;top:284px" width="26" height="24" viewBox="86 284 26 24"><g fill="#242736"><circle cx="96.2" cy="291.4" r="3.95"/><path d="M89 301.6 C89 298.6 91.2 297.4 96 297.4 C100.8 297.4 102.9 298.6 102.9 301.6 C102.9 303.1 102 303.9 100.6 303.9 L91.3 303.9 C89.9 303.9 89 303.1 89 301.6 Z"/><rect x="102.2" y="289.8" width="6" height="1.5" rx=".4"/><rect x="103.4" y="293.1" width="4.8" height="1.5" rx=".4"/><rect x="104.2" y="296.4" width="4" height="1.5" rx=".4"/></g></svg>
<svg style="left:86px;top:345px" width="26" height="24" viewBox="86 345 26 24"><g fill="#242736" stroke="#242736"><path d="M88.6 349.3 L90.9 349.3 L93.4 361.4 L105.2 361.4" fill="none" stroke-width="1.5" stroke-linecap="round" stroke-linejoin="round"/><path d="M91.9 351.3 L107 351.3 L105.3 358.6 L93.4 359.6 Z" stroke-width="0.8" stroke-linejoin="round"/><circle cx="95.3" cy="364.5" r="1.35" stroke="none"/><circle cx="102.9" cy="364.5" r="1.35" stroke="none"/></g></svg>
<svg style="left:86px;top:406px" width="26" height="24" viewBox="86 406 26 24"><g fill="#242736"><path d="M91 409.3 L106.1 409.3 L107.7 414.3 L107.7 416.2 Q106.2 417.3 104.6 416.2 Q103.1 417.3 101.5 416.2 Q100 417.3 98.4 416.2 Q96.9 417.3 95.3 416.2 Q93.8 417.3 92.2 416.2 Q90.7 417.3 89.1 416.2 L89.1 414.3 Z" stroke="#242736" stroke-width=".6" stroke-linejoin="round"/><path d="M90.3 418 Q91.7 418.8 93 418 Q94.6 418.9 96.1 418 Q97.7 418.9 99.2 418 Q100.8 418.9 102.3 418 Q103.9 418.9 105.4 418 L106.8 418 L106.8 426.2 L90.3 426.2 Z"/><rect x="92.9" y="420.2" width="1.9" height="4.3" fill="#fff"/></g></svg>
<svg style="left:86px;top:467px" width="26" height="24" viewBox="86 467 26 24"><path d="M91.6 471.6 L98.9 470.9 L107.2 479.3 L99.5 487.4 L90.6 478.7 Z" fill="#242736" stroke="#242736" stroke-width="1.3" stroke-linejoin="round"/><circle cx="94.6" cy="475" r="1.65" fill="#fff"/></svg>
<svg style="left:86px;top:530px" width="26" height="22" viewBox="86 530 26 22"><g fill="none" stroke="#242736" stroke-width="1.15" stroke-linecap="round"><path d="M93.4 534.4 C91.5 534.4 91.1 535.1 91.1 536.6 L91.1 539 C91.1 540.3 90.4 540.95 89 540.95 C90.4 540.95 91.1 541.6 91.1 542.9 L91.1 545.3 C91.1 546.8 91.5 547.5 93.4 547.5"/><path d="M104.5 534.4 C106.4 534.4 106.8 535.1 106.8 536.6 L106.8 539 C106.8 540.3 107.5 540.95 108.9 540.95 C107.5 540.95 106.8 541.6 106.8 542.9 L106.8 545.3 C106.8 546.8 106.4 547.5 104.5 547.5"/></g><text x="93.9" y="543.9" font-family="Liberation Sans" font-weight="700" font-size="8.4" letter-spacing="0.35" fill="#242736">Aa</text></svg>
<svg style="left:86px;top:592px" width="26" height="24" viewBox="86 592 26 24"><g transform="translate(0 370.3)" fill="#242736"><circle cx="93.7" cy="229.7" r="3.0"/><circle cx="103.8" cy="229.7" r="3.0"/><path d="M88.1 240.5 C88.3 236.5 90 233.7 93 233.7 L95.6 233.7 C93.5 235.5 92.4 238 92.2 240.5 Z"/><path d="M109.4 240.5 C109.2 236.5 107.5 233.7 104.5 233.7 L101.9 233.7 C104 235.5 105.1 238 105.3 240.5 Z"/><g stroke="#fff" stroke-width="1.7" paint-order="stroke"><circle cx="98.75" cy="231.3" r="3.65"/><path d="M92.9 240.9 C92.9 237.1 95.2 235.3 98.75 235.3 C102.3 235.3 104.6 237.1 104.6 240.9 Q104.6 241.7 103.8 241.7 L93.7 241.7 Q92.9 241.7 92.9 240.9 Z"/></g></g></svg>
<svg style="left:86px;top:653px" width="26" height="24" viewBox="86 653 26 24"><rect x="90.1" y="657.1" width="17" height="17.1" rx="1.8" fill="#3d68f5"/><path d="M92.4 659.3 L101.7 659.3 Q102.7 659.3 102.1 660.2 L99 665.4 L99 670.4 Q99 671.9 97.3 671.9 Q95.5 671.9 95.5 670.2 L95.5 665.4 L92 660.2 Q91.5 659.3 92.4 659.3 Z" fill="#fff"/><rect x="100.7" y="665.6" width="4.5" height="1.4" rx=".3" fill="#fff"/><rect x="100.7" y="668.15" width="4.5" height="1.4" rx=".3" fill="#fff" opacity=".8"/><rect x="100.7" y="670.7" width="4.5" height="1.4" rx=".3" fill="#fff"/></svg>
<div style="left:377.20px;top:636.00px;width:539.40px;height:368.80px;box-shadow:0 6px 26px rgba(20,25,50,.22);background:transparent"></div>
<div style="left:381.20px;top:641.00px;width:530.80px;height:359.50px;background:rgba(50,52,63,.962)"></div>
<div style="left:391.6px;top:647.8px;width:511.4px;height:281.2px;background:#fff;border-radius:7px;overflow:hidden"><div style="left:-391.6px;top:-647.8px;width:1600px;height:1050px">
<div style="left:416.70px;top:640.00px;width:1.00px;height:171.00px;background:#c3f1da"></div>
<div style="left:416.70px;top:811.00px;width:1.00px;height:119.00px;background:repeating-linear-gradient(180deg,transparent 0 7.2px,#c3c7da 7.2px 11.6px,transparent 11.6px 12.5px);"></div>
<div style="left:416.20px;top:873.00px;width:2.00px;height:57.00px;background:#fff"></div>
<div style="left:416.70px;top:878.00px;width:1.00px;height:52.00px;background:#e1e3ec"></div>
<div style="left:441.30px;top:620.00px;width:518.70px;height:102.40px;border:1px solid #e0e2ef;border-radius:4px;background:#fff"></div>
<div style="left:441.30px;top:735.80px;width:518.70px;height:75.50px;border:1px solid #e0e2ef;border-radius:4px;background:#fff"></div>
<div style="left:440.20px;top:823.80px;width:519.80px;height:36.00px;border:1px solid #8391f6;border-radius:4px;background:#fff"></div>
<div style="left:440.20px;top:878.80px;width:519.80px;height:111.20px;border:1px solid #a3adf9;border-radius:4px;background:#fff"></div>
<div style="left:465.30px;top:663.20px;width:1.00px;height:42.60px;background:#c3f1da"></div>
<div style="left:465.30px;top:752.40px;width:1.00px;height:42.40px;background:#bcc5fb"></div>
<div style="left:406.00px;top:719.60px;width:22.90px;height:18.80px;background:#b3efd0;border-radius:1.5px"></div>
<div style="left:455.00px;top:675.50px;width:23.20px;height:18.40px;background:#b3efd0;border-radius:1.5px"></div>
<div style="left:455.00px;top:764.50px;width:23.20px;height:17.70px;background:#c2cbfb;border-radius:1.5px"></div>
<div style="left:405.60px;top:907.40px;width:23.30px;height:18.20px;background:#d6d8e4;border-radius:1.5px"></div>
<div style="left:455.00px;top:890.20px;width:23.40px;height:44.80px;background:#b3efd0;border-radius:1.5px"></div>
<span class="t" style="left:409.30px;top:724.00px;font-size:9.6px;line-height:9.6px;color:#3fbf80;letter-spacing:0.192px;-webkit-text-stroke:0.2px #3fbf80;">and</span>
<span class="t" style="left:458.20px;top:680.00px;font-size:9.6px;line-height:9.6px;color:#3fbf80;letter-spacing:0.192px;-webkit-text-stroke:0.2px #3fbf80;">and</span>
<span class="t" style="left:462.00px;top:768.00px;font-size:9.6px;line-height:9.6px;color:#6b7cf2;letter-spacing:0.969px;-webkit-text-stroke:0.2px #6b7cf2;">or</span>
<span class="t" style="left:410.00px;top:912.00px;font-size:9.6px;line-height:9.6px;color:#9497ac;letter-spacing:0.628px;-webkit-text-stroke:0.2px #9497ac;">not</span>
<span class="t" style="left:458.20px;top:906.00px;font-size:9.6px;line-height:9.6px;color:#3fbf80;letter-spacing:0.192px;-webkit-text-stroke:0.2px #3fbf80;">and</span>
<svg style="left:460px;top:919px" width="14" height="10" viewBox="0 0 14 10"><path d="M3 3.4 L10 3.4 M8 1.4 L10 3.4 M11 6.8 L4 6.8 M6 8.8 L4 6.8" fill="none" stroke="#3fbf80" stroke-width="1"/></svg>
<span class="t" style="left:486.00px;top:664.00px;font-size:10.3px;line-height:10.3px;color:#9a9db2;letter-spacing:0.386px;">Age</span>
<span class="t" style="left:565.20px;top:664.00px;font-size:10.4px;line-height:10.4px;color:#3f4254;letter-spacing:0.590px;-webkit-text-stroke:0.5px #3f4254;">Equals to 21 - 30</span>
<span class="t" style="left:486.00px;top:696.00px;font-size:10.3px;line-height:10.3px;color:#9a9db2;letter-spacing:0.420px;">Address</span>
<span class="t" style="left:565.20px;top:696.00px;font-size:10.4px;line-height:10.4px;color:#3f4254;letter-spacing:0.544px;-webkit-text-stroke:0.5px #3f4254;">Equals to Thailand,Bangkok,Samphanthawong</span>
<span class="t" style="left:486.00px;top:753.00px;font-size:10.3px;line-height:10.3px;color:#9a9db2;letter-spacing:0.277px;">RFM value</span>
<span class="t" style="left:565.20px;top:753.00px;font-size:10.4px;line-height:10.4px;color:#3f4254;letter-spacing:0.569px;-webkit-text-stroke:0.5px #3f4254;">Equals to High-value customers</span>
<span class="t" style="left:486.00px;top:784.00px;font-size:10.3px;line-height:10.3px;color:#9a9db2;letter-spacing:0.468px;">Gender</span>
<span class="t" style="left:565.20px;top:784.00px;font-size:10.4px;line-height:10.4px;color:#3f4254;letter-spacing:0.544px;-webkit-text-stroke:0.5px #3f4254;">Equals to Male</span>
<span class="t" style="left:486.00px;top:896.00px;font-size:10.3px;line-height:10.3px;color:#9a9db2;letter-spacing:0.604px;">Birth month</span>
<span class="t" style="left:565.20px;top:896.00px;font-size:10.4px;line-height:10.4px;color:#3f4254;letter-spacing:0.479px;-webkit-text-stroke:0.5px #3f4254;">Equals to March</span>
<span class="t" style="left:486.00px;top:928.00px;font-size:10.3px;line-height:10.3px;color:#9a9db2;letter-spacing:0.328px;">Email domain</span>
<span class="t" style="left:565.20px;top:928.00px;font-size:10.4px;line-height:10.4px;color:#3f4254;letter-spacing:0.318px;-webkit-text-stroke:0.5px #3f4254;">Equals to Gmail</span>
<div style="left:649.30px;top:836.60px;width:11.00px;height:11.00px;background:#e3e7fd;border-radius:50%"></div>
<div style="left:652.60px;top:841.60px;width:4.40px;height:1.00px;background:#7f8ef7"></div>
<div style="left:654.30px;top:839.90px;width:1.00px;height:4.40px;background:#7f8ef7"></div>
<span class="t" style="left:668.30px;top:837.00px;font-size:10.5px;line-height:10.5px;color:#6a7bf6;font-weight:700;letter-spacing:0.826px;">Add a condition group</span>
</div></div>
<span class="t" style="left:392.00px;top:945.00px;font-size:18.0px;line-height:18.0px;color:#ffffff;letter-spacing:0.318px;-webkit-text-stroke:0.15px #ffffff;">Find your target audiences with more filter conditions and</span>
<span class="t" style="left:392.00px;top:973.00px;font-size:18.0px;line-height:18.0px;color:#ffffff;letter-spacing:0.378px;-webkit-text-stroke:0.15px #ffffff;">segmentation methods</span>
<div style="left:51.00px;top:7.75px;width:265.00px;height:74.75px;border:5px solid #376bfd"></div>
<div style="left:377.00px;top:636.00px;width:539.60px;height:368.80px;border-style:solid;border-color:#376bfd;border-width:6px 5.6px 5.8px 5.2px"></div>
<div style="left:66.00px;top:632.60px;width:316.00px;height:63.40px;border:5px solid #376bfd"></div>
<div style="left:341.00px;top:15.00px;width:58.00px;height:58.00px;background:#376bfd;border-radius:50%"></div>
<svg style="left:355px;top:24px" width="26" height="40" viewBox="355 24 26 40"><path d="M369.6 28.8 L374.2 28.8 L374.2 59 L367.8 59 L367.8 36 C366 37.3 363.6 38.3 361 38.8 L361 33.2 C364.5 32.4 367.8 31.2 369.6 28.8 Z" fill="#fff"/></svg>
<div style="left:945.00px;top:606.40px;width:58.00px;height:58.00px;background:#376bfd;border-radius:50%"></div>
<span class="t" style="left:945.5px;top:606.4px;width:58px;text-align:center;font-size:42px;line-height:58px;font-weight:700;color:#fff">2</span>
<div style="left:1576.50px;top:932.00px;width:60.00px;height:60.00px;background:#4f8df0;border-radius:50%;box-shadow:0 4px 30px rgba(30,40,80,.25)"></div>
<div style="left:1593.50px;top:947.20px;width:31.50px;height:26.80px;background:#fff;border-radius:3px"></div>
<div style="left:1597.00px;top:964.00px;width:7.00px;height:5.00px;border-bottom:2px solid #4f8df0;border-left:2px solid #4f8df0;border-radius:0 0 0 5px;transform:rotate(-20deg)"></div>
</div>
</body></html>
